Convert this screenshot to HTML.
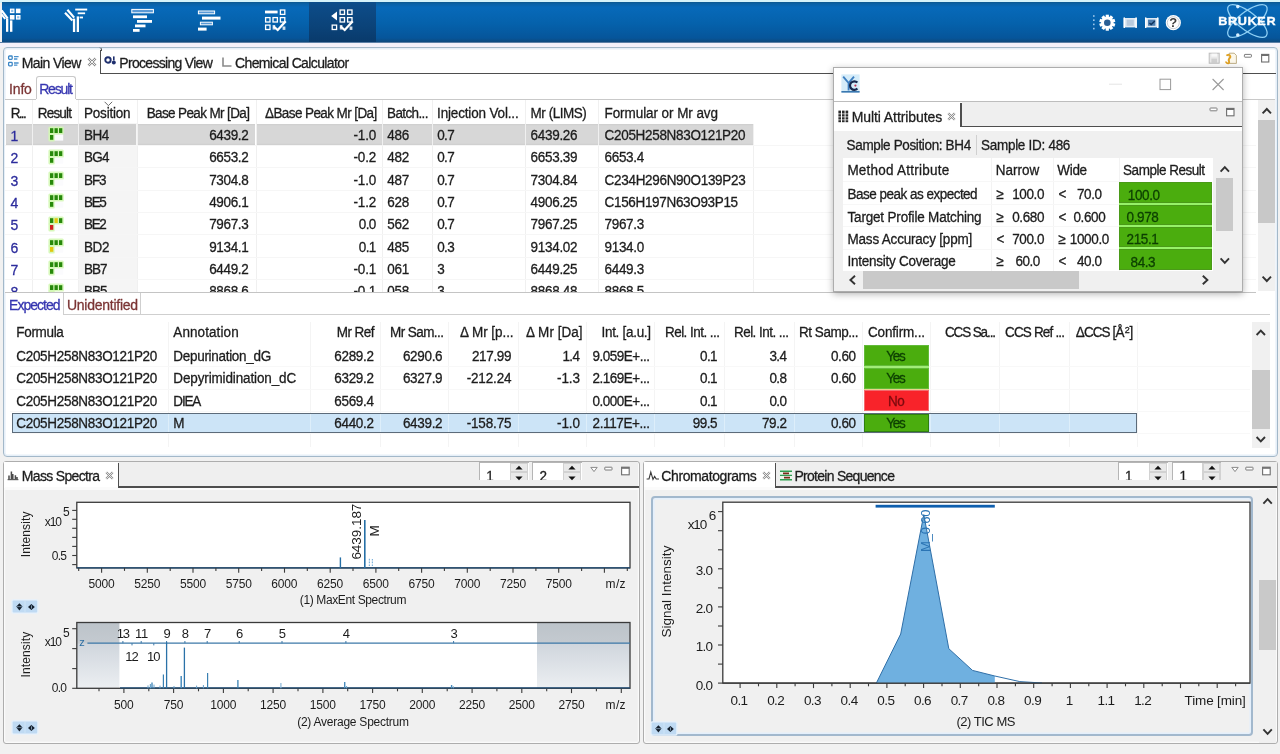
<!DOCTYPE html>
<html><head><meta charset="utf-8"><title>UI</title>
<style>
html,body{margin:0;padding:0;}
body{width:1280px;height:754px;overflow:hidden;position:relative;background:#f1f1f1;font-family:"Liberation Sans",sans-serif;}
.t{position:absolute;white-space:nowrap;font-family:"Liberation Sans",sans-serif;transform:scaleY(1.07);transform-origin:50% 52%;}
.r{position:absolute;}
.a{position:absolute;overflow:visible;}
svg text{font-family:"Liberation Sans",sans-serif;}
#w{position:absolute;left:-20px;top:-20px;width:1320px;height:794px;filter:blur(0.45px);}
#v{position:absolute;left:20px;top:20px;width:1280px;height:754px;}
.t,svg text{-webkit-text-stroke:0.28px currentColor;}
svg text{stroke-width:0.28px;}
</style></head><body><div id="w"><div class="r" style="left:0;top:0;width:1320px;height:794px;background:#f1f1f1"></div><div id="v">
<div class="r" style="left:0.00px;top:0.00px;width:1280.00px;height:754.00px;background:#f1f1f1;"></div>
<div class="r" style="left:0.00px;top:0.00px;width:1280.00px;height:2.50px;background:#d6f3fa;"></div>
<div class="r" style="left:2.00px;top:1.60px;width:1278.00px;height:40.60px;background:linear-gradient(#0d5890 0%,#0a62a8 5%,#0769b9 14%,#0561ab 55%,#06559a 90%,#0d4a7e 100%);"></div>
<div class="r" style="left:309.00px;top:2.00px;width:67.00px;height:40.00px;background:linear-gradient(#0d4d8a 0%,#0b4379 60%,#093a6b 100%);"></div>
<div class="r" style="left:0.00px;top:42.00px;width:1280.00px;height:1.20px;background:#5b7fa6;"></div>
<div class="r" style="left:0.00px;top:43.00px;width:1280.00px;height:4.00px;background:#f3f1fa;"></div>
<svg class="a" style="left:0;top:0" width="1280" height="44" viewBox="0 0 1280 44"><g fill="#ffffff"><rect x="6" y="18.4" width="2.3" height="13.4"/><rect x="10" y="20.4" width="2.4" height="11.4"/><path d="M1.6 10.4 L7.6 18.4" stroke="#ffffff" stroke-width="2.2" fill="none"/><path d="M1.6 14.4 L5.2 19" stroke="#ffffff" stroke-width="2" fill="none"/><rect x="10.5" y="9.2" width="3.4" height="3.4" fill="#8fc0ea" stroke="#ffffff" stroke-width="1.2"/><rect x="15.9" y="8.6" width="4.6" height="4.6"/><rect x="9.9" y="15" width="4.6" height="4.6"/><rect x="16.5" y="15.6" width="3.4" height="3.4" fill="#8fc0ea" stroke="#ffffff" stroke-width="1.2"/></g><g fill="#ffffff"><rect x="72.9" y="18.6" width="2.3" height="13.4"/><rect x="76.7" y="16.4" width="2.3" height="15.6"/><path d="M67.4 9.8 L74.2 17.6" stroke="#ffffff" stroke-width="2.2" fill="none"/><path d="M65 12.8 L72.4 20.6" stroke="#ffffff" stroke-width="2.2" fill="none"/><rect x="75.2" y="8.6" width="12" height="1.9"/><rect x="77.7" y="12.4" width="7.4" height="1.8"/><rect x="79.6" y="16.6" width="3.4" height="1.8"/></g><g fill="#ffffff"><rect x="131.8" y="9.4" width="21.6" height="3.4" fill="#5a9ad6" stroke="#ffffff" stroke-width="1"/><rect x="133" y="15.4" width="14" height="2.8"/><rect x="137" y="20" width="15" height="2.8"/><rect x="135" y="24.5" width="10.5" height="2.8"/><rect x="133" y="29" width="6.6" height="2.8"/></g><g fill="#ffffff"><rect x="198.4" y="11" width="16.2" height="2.8" fill="#5a9ad6" stroke="#ffffff" stroke-width="1"/><rect x="202" y="16.6" width="18.5" height="3"/><rect x="200.4" y="22.2" width="12" height="2.6" fill="#5a9ad6" stroke="#ffffff" stroke-width="1"/><rect x="198" y="27.6" width="8.6" height="3"/></g><g fill="#ffffff"><rect x="265" y="10.6" width="12.6" height="2.8"/><rect x="280.40000000000003" y="10.0" width="4.4" height="4.4" fill="none" stroke="#ffffff" stroke-width="1.3"/><rect x="265.6" y="17.6" width="4.4" height="4.4" fill="none" stroke="#ffffff" stroke-width="1.3"/><rect x="273.0" y="17.6" width="4.4" height="4.4" fill="none" stroke="#ffffff" stroke-width="1.3"/><rect x="280.40000000000003" y="17.6" width="4.4" height="4.4" fill="none" stroke="#ffffff" stroke-width="1.3"/><rect x="265.6" y="25.1" width="4.4" height="4.4" fill="none" stroke="#ffffff" stroke-width="1.3"/><rect x="272.6" y="25" width="2.6" height="4.6" opacity=".8"/><rect x="282.6" y="26.5" width="2.8" height="3.4" opacity=".8"/><path d="M274.2 25.6 L277.6 28.6 L284.8 20.4 L286.6 22 L277.8 31.4 L272.8 27.2Z"/></g><g fill="#ffffff"><path d="M331.2 16 L337 11.6 L337 20.4Z"/><rect x="340.1" y="10.0" width="4.4" height="4.4" fill="none" stroke="#ffffff" stroke-width="1.3"/><rect x="347.6" y="10.0" width="4.4" height="4.4" fill="none" stroke="#ffffff" stroke-width="1.3"/><rect x="340.1" y="17.6" width="4.4" height="4.4" fill="none" stroke="#ffffff" stroke-width="1.3"/><rect x="347.6" y="17.6" width="4.4" height="4.4" fill="none" stroke="#ffffff" stroke-width="1.3"/><rect x="332.20000000000005" y="25.1" width="4.4" height="4.4" fill="none" stroke="#ffffff" stroke-width="1.3"/><rect x="339.8" y="25" width="2.6" height="4.6" opacity=".8"/><rect x="349.6" y="26.5" width="2.8" height="3.4" opacity=".8"/><path d="M341.2 25.6 L344.6 28.6 L351.8 20.4 L353.6 22 L344.8 31.4 L339.8 27.2Z"/></g><g fill="#9cc6ea"><rect x="1093" y="15.2" width="1.6" height="1.6"/><rect x="1093" y="19.4" width="1.6" height="1.6"/><rect x="1093" y="23.6" width="1.6" height="1.6"/><rect x="1093" y="27.8" width="1.6" height="1.6"/></g><g transform="translate(1107.3 22.7)" fill="#ffffff"><rect x="-1.6" y="-8" width="3.2" height="4" transform="rotate(0)"/><rect x="-1.6" y="-8" width="3.2" height="4" transform="rotate(36)"/><rect x="-1.6" y="-8" width="3.2" height="4" transform="rotate(72)"/><rect x="-1.6" y="-8" width="3.2" height="4" transform="rotate(108)"/><rect x="-1.6" y="-8" width="3.2" height="4" transform="rotate(144)"/><rect x="-1.6" y="-8" width="3.2" height="4" transform="rotate(180)"/><rect x="-1.6" y="-8" width="3.2" height="4" transform="rotate(216)"/><rect x="-1.6" y="-8" width="3.2" height="4" transform="rotate(252)"/><rect x="-1.6" y="-8" width="3.2" height="4" transform="rotate(288)"/><rect x="-1.6" y="-8" width="3.2" height="4" transform="rotate(324)"/><circle r="6.2"/><circle r="3.3" fill="#2a5f95"/></g><g><rect x="1123.6" y="18" width="13.2" height="9.4" fill="#dfe9f3"/><rect x="1126.6" y="19.6" width="7.2" height="6.2" fill="#b8cadd"/><rect x="1123.6" y="17.4" width="1.4" height="10.6" fill="#ffffff"/><rect x="1135.4" y="17.4" width="1.4" height="10.6" fill="#ffffff"/></g><g><rect x="1145" y="18" width="13.4" height="9.4" fill="#dfe9f3"/><rect x="1148" y="19.6" width="7.4" height="6.2" fill="#4f7fb0"/><path d="M1149.4 23 l1.8 1.6 l3.6 -3.6" stroke="#10355e" stroke-width="1.4" fill="none"/><rect x="1145" y="17.4" width="1.4" height="10.6" fill="#ffffff"/><rect x="1157" y="17.4" width="1.4" height="10.6" fill="#ffffff"/></g><g><circle cx="1173.3" cy="22.7" r="7.6" fill="#ffffff"/><circle cx="1173.3" cy="22.7" r="6" fill="none" stroke="#c8cdd3" stroke-width="1"/><text x="1173.3" y="27.4" font-size="13" font-weight="bold" text-anchor="middle" fill="#3c3c3c">?</text></g><g fill="none" stroke="#8fd0f5" stroke-width="1.3"><ellipse cx="1247.4" cy="21" rx="24" ry="9" transform="rotate(38 1247.4 21)"/><ellipse cx="1247.4" cy="21" rx="24" ry="9" transform="rotate(-38 1247.4 21)"/></g><circle cx="1237.8" cy="6.6" r="1.8" fill="#d8f0ff"/><circle cx="1237.8" cy="35" r="1.8" fill="#d8f0ff"/><text transform="translate(1218.2 24.7) scale(1.268 1)" font-size="10" font-weight="bold" letter-spacing="0.5" fill="#ffffff" stroke="#ffffff" stroke-width="0.5">BRUKER</text></svg>
<div class="r" style="left:3.20px;top:47.20px;width:1274.60px;height:409.60px;background:#ffffff;border:1.4px solid #a3b8c9;border-radius:4px;box-sizing:border-box;box-shadow:inset 0 0 0 1.6px #e6eff8;"></div>
<div class="r" style="left:100.50px;top:72.60px;width:1175.90px;height:1.40px;background:#4e4e4e;"></div>
<div class="r" style="left:100.00px;top:50.00px;width:1.40px;height:23.80px;background:#4e4e4e;"></div>
<div class="r" style="left:98.60px;top:47.40px;width:3.00px;height:3.40px;background:transparent;border-top:1.3px solid #8fa2b3;border-right:1.4px solid #4e4e4e;border-top-right-radius:3px;box-sizing:border-box;"></div>
<svg class="a" style="left:7px;top:54px" width="14" height="14" viewBox="0 0 14 14"><g fill="none" stroke="#3b86c6" stroke-width="1.3"><rect x="1.6" y="2" width="3.6" height="3.4" rx=".8"/><rect x="1.6" y="8.4" width="3.6" height="3.4" rx=".8"/></g><g stroke="#4a90cc" stroke-width="1.3"><path d="M7 2.6h4.6M7 5h3.4M7 9h4.6M7 11.2h3.4"/></g></svg>
<span class="t" style="left:21.80px;top:53.60px;font-size:14px;line-height:18px;color:#1c1c1c;letter-spacing:-0.602px;">Main View</span>
<svg class="a" style="left:87px;top:57px" width="10" height="10" viewBox="0 0 10 10"><path d="M1.4 1.4 L8.6 8.6 M8.6 1.4 L1.4 8.6" stroke="#8a8a8a" stroke-width="2.4"/><path d="M1.4 1.4 L8.6 8.6 M8.6 1.4 L1.4 8.6" stroke="#ffffff" stroke-width="0.9"/></svg>
<svg class="a" style="left:104px;top:55px" width="13" height="12" viewBox="0 0 13 12"><circle cx="4" cy="5" r="2.7" fill="none" stroke="#1e2f6e" stroke-width="1.9"/><circle cx="9.8" cy="7.6" r="2" fill="#1e2f6e"/><rect x="9" y="1.4" width="1.6" height="4" fill="#1e2f6e"/></svg>
<span class="t" style="left:119.30px;top:53.60px;font-size:14px;line-height:18px;color:#1c1c1c;letter-spacing:-0.694px;">Processing View</span>
<svg class="a" style="left:221px;top:56px" width="12" height="12" viewBox="0 0 12 12"><path d="M2 1.5V10H10.5" fill="none" stroke="#8a8a8a" stroke-width="1.6"/></svg>
<span class="t" style="left:235.00px;top:53.60px;font-size:14px;line-height:18px;color:#1c1c1c;letter-spacing:-0.623px;">Chemical Calculator</span>
<svg class="a" style="left:1206px;top:50px" width="68" height="16" viewBox="1206 50 68 16"><rect x="1209.2" y="53.2" width="10" height="10" fill="#e9e9e9" stroke="#bdbdbd" stroke-width="1"/><rect x="1211.4" y="58.6" width="5.6" height="4.4" fill="#cfcfcf"/><rect x="1211.4" y="53.6" width="5.6" height="3" fill="#f8f8f8"/><path d="M1229.2 53.2h5l2.2 2.2v8h-7.2z" fill="#fbf7ea" stroke="#b9a77a" stroke-width=".9"/><path d="M1226.4 55.6c1.6-1.4 3.6-.8 4 .8c.4 1.8-1.6 2-1.8 3.4c-.2 1.4 1.4 2 .2 3.2c-1.2 1-3-.2-2.6-1.6" fill="none" stroke="#e0a020" stroke-width="1.8"/><rect x="1244.4" y="54.4" width="7" height="2.8" rx=".6" fill="#fff" stroke="#7c7c7c" stroke-width="1"/><rect x="1261.6" y="54.4" width="7.2" height="7.6" fill="#fff" stroke="#6e6e6e" stroke-width="1.1"/><rect x="1261.6" y="54.4" width="7.2" height="1.6" fill="#6e6e6e"/></svg>
<div class="r" style="left:5.00px;top:98.60px;width:30.80px;height:1.20px;background:#c9c9c9;"></div>
<div class="r" style="left:75.60px;top:98.60px;width:1199.80px;height:1.20px;background:#c9c9c9;"></div>
<div class="r" style="left:35.60px;top:76.40px;width:40.60px;height:23.00px;background:#ffffff;border:1.2px solid #c9c9c9;border-bottom:none;border-radius:3px 3px 0 0;box-sizing:border-box;"></div>
<span class="t" style="left:9.10px;top:80.40px;font-size:14px;line-height:18px;color:#7b3434;letter-spacing:-0.181px;">Info</span>
<span class="t" style="left:39.20px;top:80.40px;font-size:14px;line-height:18px;color:#3535b0;letter-spacing:-1.174px;">Result</span>
<div class="r" style="left:5px;top:100px;width:1251px;height:191.8px;overflow:hidden;background:#fff">
<div class="r" style="left:74.30px;top:23.00px;width:57.40px;height:170.00px;background:#f5f5f5;"></div>
<div class="r" style="left:1.00px;top:23.70px;width:26.20px;height:21.30px;background:#d7d7d7;box-shadow:inset 0 1.2px 0 #d0d0d0,inset 0 -1.2px 0 #d0d0d0;"></div>
<div class="r" style="left:28.40px;top:23.70px;width:44.80px;height:21.30px;background:#d7d7d7;box-shadow:inset 0 1.2px 0 #d0d0d0,inset 0 -1.2px 0 #d0d0d0;"></div>
<div class="r" style="left:74.40px;top:23.70px;width:57.00px;height:21.30px;background:#cfcfcf;box-shadow:inset 0 1.2px 0 #d0d0d0,inset 0 -1.2px 0 #d0d0d0;"></div>
<div class="r" style="left:132.80px;top:23.70px;width:117.60px;height:21.30px;background:#d7d7d7;box-shadow:inset 0 1.2px 0 #d0d0d0,inset 0 -1.2px 0 #d0d0d0;"></div>
<div class="r" style="left:251.80px;top:23.70px;width:125.00px;height:21.30px;background:#d7d7d7;box-shadow:inset 0 1.2px 0 #d0d0d0,inset 0 -1.2px 0 #d0d0d0;"></div>
<div class="r" style="left:378.20px;top:23.70px;width:48.80px;height:21.30px;background:#d7d7d7;box-shadow:inset 0 1.2px 0 #d0d0d0,inset 0 -1.2px 0 #d0d0d0;"></div>
<div class="r" style="left:428.40px;top:23.70px;width:91.40px;height:21.30px;background:#d7d7d7;box-shadow:inset 0 1.2px 0 #d0d0d0,inset 0 -1.2px 0 #d0d0d0;"></div>
<div class="r" style="left:521.20px;top:23.70px;width:71.80px;height:21.30px;background:#d7d7d7;box-shadow:inset 0 1.2px 0 #d0d0d0,inset 0 -1.2px 0 #d0d0d0;"></div>
<div class="r" style="left:594.40px;top:23.70px;width:153.60px;height:21.30px;background:#d7d7d7;box-shadow:inset 0 1.2px 0 #d0d0d0,inset 0 -1.2px 0 #d0d0d0;"></div>
<div class="r" style="left:27.20px;top:0.00px;width:1.00px;height:192.00px;background:#f0f0f0;"></div>
<div class="r" style="left:73.30px;top:0.00px;width:1.00px;height:192.00px;background:#f0f0f0;"></div>
<div class="r" style="left:131.50px;top:0.00px;width:1.00px;height:192.00px;background:#f0f0f0;"></div>
<div class="r" style="left:250.50px;top:0.00px;width:1.00px;height:192.00px;background:#f0f0f0;"></div>
<div class="r" style="left:376.90px;top:0.00px;width:1.00px;height:192.00px;background:#f0f0f0;"></div>
<div class="r" style="left:427.20px;top:0.00px;width:1.00px;height:192.00px;background:#f0f0f0;"></div>
<div class="r" style="left:520.00px;top:0.00px;width:1.00px;height:192.00px;background:#f0f0f0;"></div>
<div class="r" style="left:593.20px;top:0.00px;width:1.00px;height:192.00px;background:#f0f0f0;"></div>
<div class="r" style="left:747.50px;top:0.00px;width:1.00px;height:192.00px;background:#f0f0f0;"></div>
<div class="r" style="left:0.00px;top:45.05px;width:1251.00px;height:1.00px;background:#f6f6f6;"></div>
<div class="r" style="left:0.00px;top:67.40px;width:1251.00px;height:1.00px;background:#f6f6f6;"></div>
<div class="r" style="left:0.00px;top:89.75px;width:1251.00px;height:1.00px;background:#f6f6f6;"></div>
<div class="r" style="left:0.00px;top:112.10px;width:1251.00px;height:1.00px;background:#f6f6f6;"></div>
<div class="r" style="left:0.00px;top:134.45px;width:1251.00px;height:1.00px;background:#f6f6f6;"></div>
<div class="r" style="left:0.00px;top:156.80px;width:1251.00px;height:1.00px;background:#f6f6f6;"></div>
<div class="r" style="left:0.00px;top:179.15px;width:1251.00px;height:1.00px;background:#f6f6f6;"></div>
<div class="r" style="left:0.00px;top:201.50px;width:1251.00px;height:1.00px;background:#f6f6f6;"></div>
<div class="r" style="left:748.00px;top:0.00px;width:503.00px;height:24.00px;background:#ffffff;"></div>
<span class="t" style="left:5.70px;top:4.50px;font-size:13.5px;line-height:18px;color:#1c1c1c;letter-spacing:-1.667px;">R...</span>
<span class="t" style="left:32.80px;top:4.50px;font-size:13.5px;line-height:18px;color:#1c1c1c;letter-spacing:-0.816px;">Result</span>
<span class="t" style="left:79.00px;top:4.50px;font-size:13.5px;line-height:18px;color:#1c1c1c;letter-spacing:-0.207px;">Position</span>
<span class="t" style="left:141.70px;top:4.50px;font-size:13.5px;line-height:18px;color:#1c1c1c;letter-spacing:-0.627px;">Base Peak Mr [Da]</span>
<span class="t" style="left:260.00px;top:4.50px;font-size:13.5px;line-height:18px;color:#1c1c1c;letter-spacing:-0.591px;">ΔBase Peak Mr [Da]</span>
<span class="t" style="left:382.10px;top:4.50px;font-size:13.5px;line-height:18px;color:#1c1c1c;letter-spacing:-0.626px;">Batch...</span>
<span class="t" style="left:432.10px;top:4.50px;font-size:13.5px;line-height:18px;color:#1c1c1c;letter-spacing:-0.165px;">Injection Vol...</span>
<span class="t" style="left:525.60px;top:4.50px;font-size:13.5px;line-height:18px;color:#1c1c1c;letter-spacing:-0.477px;">Mr (LIMS)</span>
<span class="t" style="left:599.50px;top:4.50px;font-size:13.5px;line-height:18px;color:#1c1c1c;letter-spacing:-0.073px;">Formular or Mr avg</span>
<svg class="a" style="left:99px;top:1px" width="9" height="6" viewBox="0 0 9 6"><path d="M0.6 0.8 L4.4 4.6 L8.2 0.8" fill="none" stroke="#6a6a6a" stroke-width="1"/></svg>
<span class="t" style="left:5.60px;top:26.90px;font-size:14px;line-height:18px;color:#2c2c9c;letter-spacing:0.000px;">1</span>
<svg class="a" style="left:43.0px;top:26.3px" width="17" height="16" viewBox="-2 -2 17 16"><rect x="-1.6" y="-1.6" width="15.4" height="8.4" rx="1.5" fill="#d3f7b4" opacity=".9"/><rect x="-1.6" y="5" width="6.6" height="8.4" rx="1.5" fill="#d3f7b4" opacity=".9"/><rect x="4.6" y="6.6" width="8.6" height="6" fill="#fbfbfd"/><rect x="0.0" y="0.2" width="3.3" height="4.8" fill="#27890a"/><rect x="4.5" y="0.2" width="3.3" height="4.8" fill="#27890a"/><rect x="9.0" y="0.2" width="3.3" height="4.8" fill="#27890a"/><rect x="0" y="7" width="3.3" height="4.8" fill="#27890a"/></svg>
<span class="t" style="left:79.00px;top:26.90px;font-size:13.5px;line-height:18px;color:#1c1c1c;letter-spacing:-0.533px;">BH4</span>
<span class="t" style="left:204.15px;top:26.90px;font-size:13.5px;line-height:18px;color:#1c1c1c;letter-spacing:-0.336px;">6439.2</span>
<span class="t" style="left:348.50px;top:26.90px;font-size:13.5px;line-height:18px;color:#1c1c1c;letter-spacing:-0.127px;">-1.0</span>
<span class="t" style="left:382.20px;top:26.90px;font-size:13.5px;line-height:18px;color:#1c1c1c;letter-spacing:-0.248px;">486</span>
<span class="t" style="left:432.20px;top:26.90px;font-size:13.5px;line-height:18px;color:#1c1c1c;letter-spacing:-0.591px;">0.7</span>
<span class="t" style="left:525.60px;top:26.90px;font-size:13.5px;line-height:18px;color:#1c1c1c;letter-spacing:-0.307px;">6439.26</span>
<span class="t" style="left:599.60px;top:26.90px;font-size:13.5px;line-height:18px;color:#1c1c1c;letter-spacing:-0.321px;">C205H258N83O121P20</span>
<span class="t" style="left:5.60px;top:49.25px;font-size:14px;line-height:18px;color:#2c2c9c;letter-spacing:0.000px;">2</span>
<svg class="a" style="left:43.0px;top:48.7px" width="17" height="16" viewBox="-2 -2 17 16"><rect x="-1.6" y="-1.6" width="15.4" height="8.4" rx="1.5" fill="#d3f7b4" opacity=".9"/><rect x="-1.6" y="5" width="6.6" height="8.4" rx="1.5" fill="#d3f7b4" opacity=".9"/><rect x="4.6" y="6.6" width="8.6" height="6" fill="#fbfbfd"/><rect x="0.0" y="0.2" width="3.3" height="4.8" fill="#27890a"/><rect x="4.5" y="0.2" width="3.3" height="4.8" fill="#27890a"/><rect x="9.0" y="0.2" width="3.3" height="4.8" fill="#27890a"/><rect x="0" y="7" width="3.3" height="4.8" fill="#27890a"/></svg>
<span class="t" style="left:79.00px;top:49.25px;font-size:13.5px;line-height:18px;color:#1c1c1c;letter-spacing:-0.808px;">BG4</span>
<span class="t" style="left:204.15px;top:49.25px;font-size:13.5px;line-height:18px;color:#1c1c1c;letter-spacing:-0.336px;">6653.2</span>
<span class="t" style="left:348.50px;top:49.25px;font-size:13.5px;line-height:18px;color:#1c1c1c;letter-spacing:-0.127px;">-0.2</span>
<span class="t" style="left:382.20px;top:49.25px;font-size:13.5px;line-height:18px;color:#1c1c1c;letter-spacing:-0.248px;">482</span>
<span class="t" style="left:432.20px;top:49.25px;font-size:13.5px;line-height:18px;color:#1c1c1c;letter-spacing:-0.591px;">0.7</span>
<span class="t" style="left:525.60px;top:49.25px;font-size:13.5px;line-height:18px;color:#1c1c1c;letter-spacing:-0.307px;">6653.39</span>
<span class="t" style="left:599.60px;top:49.25px;font-size:13.5px;line-height:18px;color:#1c1c1c;letter-spacing:-0.336px;">6653.4</span>
<span class="t" style="left:5.60px;top:71.60px;font-size:14px;line-height:18px;color:#2c2c9c;letter-spacing:0.000px;">3</span>
<svg class="a" style="left:43.0px;top:71.0px" width="17" height="16" viewBox="-2 -2 17 16"><rect x="-1.6" y="-1.6" width="15.4" height="8.4" rx="1.5" fill="#d3f7b4" opacity=".9"/><rect x="-1.6" y="5" width="6.6" height="8.4" rx="1.5" fill="#d3f7b4" opacity=".9"/><rect x="4.6" y="6.6" width="8.6" height="6" fill="#fbfbfd"/><rect x="0.0" y="0.2" width="3.3" height="4.8" fill="#27890a"/><rect x="4.5" y="0.2" width="3.3" height="4.8" fill="#27890a"/><rect x="9.0" y="0.2" width="3.3" height="4.8" fill="#27890a"/><rect x="0" y="7" width="3.3" height="4.8" fill="#27890a"/></svg>
<span class="t" style="left:79.00px;top:71.60px;font-size:13.5px;line-height:18px;color:#1c1c1c;letter-spacing:-1.083px;">BF3</span>
<span class="t" style="left:204.15px;top:71.60px;font-size:13.5px;line-height:18px;color:#1c1c1c;letter-spacing:-0.336px;">7304.8</span>
<span class="t" style="left:348.50px;top:71.60px;font-size:13.5px;line-height:18px;color:#1c1c1c;letter-spacing:-0.127px;">-1.0</span>
<span class="t" style="left:382.20px;top:71.60px;font-size:13.5px;line-height:18px;color:#1c1c1c;letter-spacing:-0.248px;">487</span>
<span class="t" style="left:432.20px;top:71.60px;font-size:13.5px;line-height:18px;color:#1c1c1c;letter-spacing:-0.591px;">0.7</span>
<span class="t" style="left:525.60px;top:71.60px;font-size:13.5px;line-height:18px;color:#1c1c1c;letter-spacing:-0.307px;">7304.84</span>
<span class="t" style="left:599.60px;top:71.60px;font-size:13.5px;line-height:18px;color:#1c1c1c;letter-spacing:-0.309px;">C234H296N90O139P23</span>
<span class="t" style="left:5.60px;top:93.95px;font-size:14px;line-height:18px;color:#2c2c9c;letter-spacing:0.000px;">4</span>
<svg class="a" style="left:43.0px;top:93.4px" width="17" height="16" viewBox="-2 -2 17 16"><rect x="-1.6" y="-1.6" width="15.4" height="8.4" rx="1.5" fill="#d3f7b4" opacity=".9"/><rect x="-1.6" y="5" width="6.6" height="8.4" rx="1.5" fill="#d3f7b4" opacity=".9"/><rect x="4.6" y="6.6" width="8.6" height="6" fill="#fbfbfd"/><rect x="0.0" y="0.2" width="3.3" height="4.8" fill="#27890a"/><rect x="4.5" y="0.2" width="3.3" height="4.8" fill="#27890a"/><rect x="9.0" y="0.2" width="3.3" height="4.8" fill="#27890a"/><rect x="0" y="7" width="3.3" height="4.8" fill="#27890a"/></svg>
<span class="t" style="left:79.00px;top:93.95px;font-size:13.5px;line-height:18px;color:#1c1c1c;letter-spacing:-1.358px;">BE5</span>
<span class="t" style="left:204.15px;top:93.95px;font-size:13.5px;line-height:18px;color:#1c1c1c;letter-spacing:-0.336px;">4906.1</span>
<span class="t" style="left:348.50px;top:93.95px;font-size:13.5px;line-height:18px;color:#1c1c1c;letter-spacing:-0.127px;">-1.2</span>
<span class="t" style="left:382.20px;top:93.95px;font-size:13.5px;line-height:18px;color:#1c1c1c;letter-spacing:-0.248px;">628</span>
<span class="t" style="left:432.20px;top:93.95px;font-size:13.5px;line-height:18px;color:#1c1c1c;letter-spacing:-0.591px;">0.7</span>
<span class="t" style="left:525.60px;top:93.95px;font-size:13.5px;line-height:18px;color:#1c1c1c;letter-spacing:-0.307px;">4906.25</span>
<span class="t" style="left:599.60px;top:93.95px;font-size:13.5px;line-height:18px;color:#1c1c1c;letter-spacing:-0.334px;">C156H197N63O93P15</span>
<span class="t" style="left:5.60px;top:116.30px;font-size:14px;line-height:18px;color:#2c2c9c;letter-spacing:0.000px;">5</span>
<svg class="a" style="left:43.0px;top:115.7px" width="17" height="16" viewBox="-2 -2 17 16"><rect x="-1.6" y="-1.6" width="15.4" height="8.4" rx="1.5" fill="#d3f7b4" opacity=".9"/><rect x="-1.6" y="5" width="6.6" height="8.4" rx="1.5" fill="#d3f7b4" opacity=".9"/><rect x="4.6" y="6.6" width="8.6" height="6" fill="#fbfbfd"/><rect x="0.0" y="0.2" width="3.3" height="4.8" fill="#27890a"/><rect x="4.5" y="0.2" width="3.3" height="4.8" fill="#e2c710"/><rect x="9.0" y="0.2" width="3.3" height="4.8" fill="#27890a"/><rect x="0" y="7" width="3.3" height="4.8" fill="#d02020"/></svg>
<span class="t" style="left:79.00px;top:116.30px;font-size:13.5px;line-height:18px;color:#1c1c1c;letter-spacing:-1.358px;">BE2</span>
<span class="t" style="left:204.15px;top:116.30px;font-size:13.5px;line-height:18px;color:#1c1c1c;letter-spacing:-0.336px;">7967.3</span>
<span class="t" style="left:353.80px;top:116.30px;font-size:13.5px;line-height:18px;color:#1c1c1c;letter-spacing:-0.591px;">0.0</span>
<span class="t" style="left:382.20px;top:116.30px;font-size:13.5px;line-height:18px;color:#1c1c1c;letter-spacing:-0.248px;">562</span>
<span class="t" style="left:432.20px;top:116.30px;font-size:13.5px;line-height:18px;color:#1c1c1c;letter-spacing:-0.591px;">0.7</span>
<span class="t" style="left:525.60px;top:116.30px;font-size:13.5px;line-height:18px;color:#1c1c1c;letter-spacing:-0.307px;">7967.25</span>
<span class="t" style="left:599.60px;top:116.30px;font-size:13.5px;line-height:18px;color:#1c1c1c;letter-spacing:-0.336px;">7967.3</span>
<span class="t" style="left:5.60px;top:138.65px;font-size:14px;line-height:18px;color:#2c2c9c;letter-spacing:0.000px;">6</span>
<svg class="a" style="left:43.0px;top:138.1px" width="17" height="16" viewBox="-2 -2 17 16"><rect x="-1.6" y="-1.6" width="15.4" height="8.4" rx="1.5" fill="#d3f7b4" opacity=".9"/><rect x="-1.6" y="5" width="6.6" height="8.4" rx="1.5" fill="#d3f7b4" opacity=".9"/><rect x="4.6" y="6.6" width="8.6" height="6" fill="#fbfbfd"/><rect x="0.0" y="0.2" width="3.3" height="4.8" fill="#27890a"/><rect x="4.5" y="0.2" width="3.3" height="4.8" fill="#27890a"/><rect x="9.0" y="0.2" width="3.3" height="4.8" fill="#27890a"/><rect x="0" y="7" width="3.3" height="4.8" fill="#e2c710"/></svg>
<span class="t" style="left:79.00px;top:138.65px;font-size:13.5px;line-height:18px;color:#1c1c1c;letter-spacing:-0.433px;">BD2</span>
<span class="t" style="left:204.15px;top:138.65px;font-size:13.5px;line-height:18px;color:#1c1c1c;letter-spacing:-0.336px;">9134.1</span>
<span class="t" style="left:353.80px;top:138.65px;font-size:13.5px;line-height:18px;color:#1c1c1c;letter-spacing:-0.591px;">0.1</span>
<span class="t" style="left:382.20px;top:138.65px;font-size:13.5px;line-height:18px;color:#1c1c1c;letter-spacing:-0.248px;">485</span>
<span class="t" style="left:432.20px;top:138.65px;font-size:13.5px;line-height:18px;color:#1c1c1c;letter-spacing:-0.591px;">0.3</span>
<span class="t" style="left:525.60px;top:138.65px;font-size:13.5px;line-height:18px;color:#1c1c1c;letter-spacing:-0.307px;">9134.02</span>
<span class="t" style="left:599.60px;top:138.65px;font-size:13.5px;line-height:18px;color:#1c1c1c;letter-spacing:-0.336px;">9134.0</span>
<span class="t" style="left:5.60px;top:161.00px;font-size:14px;line-height:18px;color:#2c2c9c;letter-spacing:0.000px;">7</span>
<svg class="a" style="left:43.0px;top:160.4px" width="17" height="16" viewBox="-2 -2 17 16"><rect x="-1.6" y="-1.6" width="15.4" height="8.4" rx="1.5" fill="#d3f7b4" opacity=".9"/><rect x="-1.6" y="5" width="6.6" height="8.4" rx="1.5" fill="#d3f7b4" opacity=".9"/><rect x="4.6" y="6.6" width="8.6" height="6" fill="#fbfbfd"/><rect x="0.0" y="0.2" width="3.3" height="4.8" fill="#27890a"/><rect x="4.5" y="0.2" width="3.3" height="4.8" fill="#27890a"/><rect x="9.0" y="0.2" width="3.3" height="4.8" fill="#27890a"/><rect x="0" y="7" width="3.3" height="4.8" fill="#27890a"/></svg>
<span class="t" style="left:79.00px;top:161.00px;font-size:13.5px;line-height:18px;color:#1c1c1c;letter-spacing:-0.958px;">BB7</span>
<span class="t" style="left:204.15px;top:161.00px;font-size:13.5px;line-height:18px;color:#1c1c1c;letter-spacing:-0.336px;">6449.2</span>
<span class="t" style="left:348.50px;top:161.00px;font-size:13.5px;line-height:18px;color:#1c1c1c;letter-spacing:-0.127px;">-0.1</span>
<span class="t" style="left:382.20px;top:161.00px;font-size:13.5px;line-height:18px;color:#1c1c1c;letter-spacing:-0.248px;">061</span>
<span class="t" style="left:432.20px;top:161.00px;font-size:13.5px;line-height:18px;color:#1c1c1c;letter-spacing:0.000px;">3</span>
<span class="t" style="left:525.60px;top:161.00px;font-size:13.5px;line-height:18px;color:#1c1c1c;letter-spacing:-0.307px;">6449.25</span>
<span class="t" style="left:599.60px;top:161.00px;font-size:13.5px;line-height:18px;color:#1c1c1c;letter-spacing:-0.336px;">6449.3</span>
<span class="t" style="left:5.60px;top:183.35px;font-size:14px;line-height:18px;color:#2c2c9c;letter-spacing:0.000px;">8</span>
<svg class="a" style="left:43.0px;top:182.8px" width="17" height="16" viewBox="-2 -2 17 16"><rect x="-1.6" y="-1.6" width="15.4" height="8.4" rx="1.5" fill="#d3f7b4" opacity=".9"/><rect x="-1.6" y="5" width="6.6" height="8.4" rx="1.5" fill="#d3f7b4" opacity=".9"/><rect x="4.6" y="6.6" width="8.6" height="6" fill="#fbfbfd"/><rect x="0.0" y="0.2" width="3.3" height="4.8" fill="#27890a"/><rect x="4.5" y="0.2" width="3.3" height="4.8" fill="#27890a"/><rect x="9.0" y="0.2" width="3.3" height="4.8" fill="#27890a"/><rect x="0" y="7" width="3.3" height="4.8" fill="#27890a"/></svg>
<span class="t" style="left:79.00px;top:183.35px;font-size:13.5px;line-height:18px;color:#1c1c1c;letter-spacing:-0.958px;">BB5</span>
<span class="t" style="left:204.15px;top:183.35px;font-size:13.5px;line-height:18px;color:#1c1c1c;letter-spacing:-0.336px;">8868.6</span>
<span class="t" style="left:348.50px;top:183.35px;font-size:13.5px;line-height:18px;color:#1c1c1c;letter-spacing:-0.127px;">-0.1</span>
<span class="t" style="left:382.20px;top:183.35px;font-size:13.5px;line-height:18px;color:#1c1c1c;letter-spacing:-0.248px;">058</span>
<span class="t" style="left:432.20px;top:183.35px;font-size:13.5px;line-height:18px;color:#1c1c1c;letter-spacing:0.000px;">3</span>
<span class="t" style="left:525.60px;top:183.35px;font-size:13.5px;line-height:18px;color:#1c1c1c;letter-spacing:-0.307px;">8868.48</span>
<span class="t" style="left:599.60px;top:183.35px;font-size:13.5px;line-height:18px;color:#1c1c1c;letter-spacing:-0.336px;">8868.5</span>
</div>
<div class="r" style="left:5.00px;top:291.60px;width:1251.00px;height:1.20px;background:#c4c4c4;"></div>
<div class="r" style="left:1257.60px;top:100.00px;width:17.60px;height:191.00px;background:#f0f0f0;"></div>
<div class="r" style="left:1257.60px;top:120.00px;width:17.60px;height:103.40px;background:#c8c8c8;"></div>
<svg class="a" style="left:1257.6px;top:100px" width="18" height="191" viewBox="0 0 18 191"><path d="M4.6 13.4 L8.8 9 L13 13.4" fill="none" stroke="#333" stroke-width="1.9"/><path d="M4.6 176.6 L8.8 181 L13 176.6" fill="none" stroke="#333" stroke-width="1.9"/></svg>
<span class="t" style="left:9.10px;top:295.80px;font-size:14px;line-height:18px;color:#3535b0;letter-spacing:-0.994px;">Expected</span>
<span class="t" style="left:67.00px;top:295.80px;font-size:14px;line-height:18px;color:#7b3434;letter-spacing:-0.264px;">Unidentified</span>
<div class="r" style="left:63.00px;top:293.40px;width:1.20px;height:21.40px;background:#cfcfcf;"></div>
<div class="r" style="left:139.80px;top:293.40px;width:1.20px;height:21.40px;background:#cfcfcf;"></div>
<div class="r" style="left:63.00px;top:314.20px;width:1207.00px;height:1.20px;background:#cfcfcf;"></div>
<div class="r" style="left:167.80px;top:322.00px;width:1.00px;height:125.00px;background:#f4f4f4;"></div>
<div class="r" style="left:309.50px;top:322.00px;width:1.00px;height:125.00px;background:#f4f4f4;"></div>
<div class="r" style="left:379.50px;top:322.00px;width:1.00px;height:125.00px;background:#f4f4f4;"></div>
<div class="r" style="left:448.00px;top:322.00px;width:1.00px;height:125.00px;background:#f4f4f4;"></div>
<div class="r" style="left:518.00px;top:322.00px;width:1.00px;height:125.00px;background:#f4f4f4;"></div>
<div class="r" style="left:585.50px;top:322.00px;width:1.00px;height:125.00px;background:#f4f4f4;"></div>
<div class="r" style="left:653.50px;top:322.00px;width:1.00px;height:125.00px;background:#f4f4f4;"></div>
<div class="r" style="left:723.50px;top:322.00px;width:1.00px;height:125.00px;background:#f4f4f4;"></div>
<div class="r" style="left:793.50px;top:322.00px;width:1.00px;height:125.00px;background:#f4f4f4;"></div>
<div class="r" style="left:862.00px;top:322.00px;width:1.00px;height:125.00px;background:#f4f4f4;"></div>
<div class="r" style="left:929.50px;top:322.00px;width:1.00px;height:125.00px;background:#f4f4f4;"></div>
<div class="r" style="left:998.50px;top:322.00px;width:1.00px;height:125.00px;background:#f4f4f4;"></div>
<div class="r" style="left:1068.50px;top:322.00px;width:1.00px;height:125.00px;background:#f4f4f4;"></div>
<div class="r" style="left:1137.00px;top:322.00px;width:1.00px;height:125.00px;background:#f4f4f4;"></div>
<div class="r" style="left:10.00px;top:366.40px;width:1240.00px;height:1.00px;background:#f8f8f8;"></div>
<div class="r" style="left:10.00px;top:388.60px;width:1240.00px;height:1.00px;background:#f8f8f8;"></div>
<div class="r" style="left:10.00px;top:410.70px;width:1240.00px;height:1.00px;background:#f8f8f8;"></div>
<div class="r" style="left:10.00px;top:433.10px;width:1240.00px;height:1.00px;background:#f8f8f8;"></div>
<span class="t" style="left:16.30px;top:324.20px;font-size:13.5px;line-height:18px;color:#1c1c1c;letter-spacing:-0.324px;">Formula</span>
<span class="t" style="left:173.30px;top:324.20px;font-size:13.5px;line-height:18px;color:#1c1c1c;letter-spacing:0.090px;">Annotation</span>
<span class="t" style="left:336.80px;top:324.20px;font-size:13.5px;line-height:18px;color:#1c1c1c;letter-spacing:-0.583px;">Mr Ref</span>
<span class="t" style="left:390.00px;top:324.20px;font-size:13.5px;line-height:18px;color:#1c1c1c;letter-spacing:-0.564px;">Mr Sam...</span>
<span class="t" style="left:460.00px;top:324.20px;font-size:13.5px;line-height:18px;color:#1c1c1c;letter-spacing:-0.048px;">Δ Mr [p...</span>
<span class="t" style="left:526.00px;top:324.20px;font-size:13.5px;line-height:18px;color:#1c1c1c;letter-spacing:0.040px;">Δ Mr [Da]</span>
<span class="t" style="left:601.50px;top:324.20px;font-size:13.5px;line-height:18px;color:#1c1c1c;letter-spacing:-0.295px;">Int. [a.u.]</span>
<span class="t" style="left:665.00px;top:324.20px;font-size:13.5px;line-height:18px;color:#1c1c1c;letter-spacing:-0.544px;">Rel. Int. ...</span>
<span class="t" style="left:734.00px;top:324.20px;font-size:13.5px;line-height:18px;color:#1c1c1c;letter-spacing:-0.544px;">Rel. Int. ...</span>
<span class="t" style="left:799.00px;top:324.20px;font-size:13.5px;line-height:18px;color:#1c1c1c;letter-spacing:-0.465px;">Rt Samp...</span>
<span class="t" style="left:868.00px;top:324.20px;font-size:13.5px;line-height:18px;color:#1c1c1c;letter-spacing:-0.170px;">Confirm...</span>
<span class="t" style="left:945.00px;top:324.20px;font-size:13.5px;line-height:18px;color:#1c1c1c;letter-spacing:-1.127px;">CCS Sa...</span>
<span class="t" style="left:1005.00px;top:324.20px;font-size:13.5px;line-height:18px;color:#1c1c1c;letter-spacing:-0.827px;">CCS Ref ...</span>
<span class="t" style="left:1075.80px;top:324.20px;font-size:13.5px;line-height:18px;color:#1c1c1c;letter-spacing:-0.903px;">ΔCCS [Å</span>
<span class="t" style="left:1124.80px;top:320.60px;font-size:9px;line-height:18px;color:#1c1c1c;letter-spacing:0.000px;">2</span>
<span class="t" style="left:1129.60px;top:324.20px;font-size:13.5px;line-height:18px;color:#1c1c1c;letter-spacing:0.000px;">]</span>
<div class="r" style="left:12.20px;top:413.00px;width:1125.20px;height:20.20px;background:#cce4f7;border:1.3px solid #5c6b7a;box-sizing:border-box;"></div>
<div class="r" style="left:167.80px;top:414.20px;width:1.00px;height:17.80px;background:#ddeefa;"></div>
<div class="r" style="left:309.50px;top:414.20px;width:1.00px;height:17.80px;background:#ddeefa;"></div>
<div class="r" style="left:379.50px;top:414.20px;width:1.00px;height:17.80px;background:#ddeefa;"></div>
<div class="r" style="left:448.00px;top:414.20px;width:1.00px;height:17.80px;background:#ddeefa;"></div>
<div class="r" style="left:518.00px;top:414.20px;width:1.00px;height:17.80px;background:#ddeefa;"></div>
<div class="r" style="left:585.50px;top:414.20px;width:1.00px;height:17.80px;background:#ddeefa;"></div>
<div class="r" style="left:653.50px;top:414.20px;width:1.00px;height:17.80px;background:#ddeefa;"></div>
<div class="r" style="left:723.50px;top:414.20px;width:1.00px;height:17.80px;background:#ddeefa;"></div>
<div class="r" style="left:793.50px;top:414.20px;width:1.00px;height:17.80px;background:#ddeefa;"></div>
<div class="r" style="left:862.00px;top:414.20px;width:1.00px;height:17.80px;background:#ddeefa;"></div>
<div class="r" style="left:929.50px;top:414.20px;width:1.00px;height:17.80px;background:#ddeefa;"></div>
<div class="r" style="left:998.50px;top:414.20px;width:1.00px;height:17.80px;background:#ddeefa;"></div>
<div class="r" style="left:1068.50px;top:414.20px;width:1.00px;height:17.80px;background:#ddeefa;"></div>
<div class="r" style="left:863.60px;top:345.00px;width:65.60px;height:44.40px;background:#a2ec78;"></div>
<div class="r" style="left:863.60px;top:388.80px;width:65.60px;height:1.40px;background:#eed28a;"></div>
<span class="t" style="left:16.30px;top:348.10px;font-size:13.5px;line-height:18px;color:#1c1c1c;letter-spacing:-0.315px;">C205H258N83O121P20</span>
<span class="t" style="left:173.30px;top:348.10px;font-size:13.5px;line-height:18px;color:#1c1c1c;letter-spacing:-0.296px;">Depurination_dG</span>
<span class="t" style="left:334.35px;top:348.10px;font-size:13.5px;line-height:18px;color:#1c1c1c;letter-spacing:-0.336px;">6289.2</span>
<span class="t" style="left:402.95px;top:348.10px;font-size:13.5px;line-height:18px;color:#1c1c1c;letter-spacing:-0.336px;">6290.6</span>
<span class="t" style="left:471.95px;top:348.10px;font-size:13.5px;line-height:18px;color:#1c1c1c;letter-spacing:-0.336px;">217.99</span>
<span class="t" style="left:562.40px;top:348.10px;font-size:13.5px;line-height:18px;color:#1c1c1c;letter-spacing:-0.591px;">1.4</span>
<span class="t" style="left:592.60px;top:348.10px;font-size:13.5px;line-height:18px;color:#1c1c1c;letter-spacing:-0.506px;">9.059E+...</span>
<span class="t" style="left:700.00px;top:348.10px;font-size:13.5px;line-height:18px;color:#1c1c1c;letter-spacing:-0.591px;">0.1</span>
<span class="t" style="left:769.40px;top:348.10px;font-size:13.5px;line-height:18px;color:#1c1c1c;letter-spacing:-0.591px;">3.4</span>
<span class="t" style="left:831.05px;top:348.10px;font-size:13.5px;line-height:18px;color:#1c1c1c;letter-spacing:-0.449px;">0.60</span>
<div class="r" style="left:863.60px;top:345.00px;width:65.60px;height:21.40px;background:#4bad0e;box-shadow:inset 0 0 0 1px #63bb3a;"></div>
<span class="t" style="left:886.20px;top:348.10px;font-size:13.5px;line-height:18px;color:#0c3f02;letter-spacing:-1.216px;">Yes</span>
<span class="t" style="left:16.30px;top:370.35px;font-size:13.5px;line-height:18px;color:#1c1c1c;letter-spacing:-0.315px;">C205H258N83O121P20</span>
<span class="t" style="left:173.30px;top:370.35px;font-size:13.5px;line-height:18px;color:#1c1c1c;letter-spacing:-0.133px;">Depyrimidination_dC</span>
<span class="t" style="left:334.35px;top:370.35px;font-size:13.5px;line-height:18px;color:#1c1c1c;letter-spacing:-0.336px;">6329.2</span>
<span class="t" style="left:402.95px;top:370.35px;font-size:13.5px;line-height:18px;color:#1c1c1c;letter-spacing:-0.336px;">6327.9</span>
<span class="t" style="left:466.65px;top:370.35px;font-size:13.5px;line-height:18px;color:#1c1c1c;letter-spacing:-0.146px;">-212.24</span>
<span class="t" style="left:557.10px;top:370.35px;font-size:13.5px;line-height:18px;color:#1c1c1c;letter-spacing:-0.127px;">-1.3</span>
<span class="t" style="left:592.60px;top:370.35px;font-size:13.5px;line-height:18px;color:#1c1c1c;letter-spacing:-0.506px;">2.169E+...</span>
<span class="t" style="left:700.00px;top:370.35px;font-size:13.5px;line-height:18px;color:#1c1c1c;letter-spacing:-0.591px;">0.1</span>
<span class="t" style="left:769.40px;top:370.35px;font-size:13.5px;line-height:18px;color:#1c1c1c;letter-spacing:-0.591px;">0.8</span>
<span class="t" style="left:831.05px;top:370.35px;font-size:13.5px;line-height:18px;color:#1c1c1c;letter-spacing:-0.449px;">0.60</span>
<div class="r" style="left:863.60px;top:367.60px;width:65.60px;height:21.00px;background:#4bad0e;box-shadow:inset 0 0 0 1px #63bb3a;"></div>
<span class="t" style="left:886.20px;top:370.35px;font-size:13.5px;line-height:18px;color:#0c3f02;letter-spacing:-1.216px;">Yes</span>
<span class="t" style="left:16.30px;top:392.60px;font-size:13.5px;line-height:18px;color:#1c1c1c;letter-spacing:-0.315px;">C205H258N83O121P20</span>
<span class="t" style="left:173.30px;top:392.60px;font-size:13.5px;line-height:18px;color:#1c1c1c;letter-spacing:-1.167px;">DIEA</span>
<span class="t" style="left:334.35px;top:392.60px;font-size:13.5px;line-height:18px;color:#1c1c1c;letter-spacing:-0.336px;">6569.4</span>
<span class="t" style="left:592.60px;top:392.60px;font-size:13.5px;line-height:18px;color:#1c1c1c;letter-spacing:-0.506px;">0.000E+...</span>
<span class="t" style="left:700.00px;top:392.60px;font-size:13.5px;line-height:18px;color:#1c1c1c;letter-spacing:-0.591px;">0.1</span>
<span class="t" style="left:769.40px;top:392.60px;font-size:13.5px;line-height:18px;color:#1c1c1c;letter-spacing:-0.591px;">0.0</span>
<div class="r" style="left:863.60px;top:390.00px;width:65.60px;height:21.00px;background:#f8232a;box-shadow:inset 0 0 0 1px #f36a6e;"></div>
<span class="t" style="left:887.90px;top:392.60px;font-size:13.5px;line-height:18px;color:#7d0a0e;letter-spacing:-0.266px;">No</span>
<span class="t" style="left:16.30px;top:414.85px;font-size:13.5px;line-height:18px;color:#1c1c1c;letter-spacing:-0.315px;">C205H258N83O121P20</span>
<span class="t" style="left:173.30px;top:414.85px;font-size:13.5px;line-height:18px;color:#1c1c1c;letter-spacing:0.000px;">M</span>
<span class="t" style="left:334.35px;top:414.85px;font-size:13.5px;line-height:18px;color:#1c1c1c;letter-spacing:-0.336px;">6440.2</span>
<span class="t" style="left:402.95px;top:414.85px;font-size:13.5px;line-height:18px;color:#1c1c1c;letter-spacing:-0.336px;">6439.2</span>
<span class="t" style="left:466.65px;top:414.85px;font-size:13.5px;line-height:18px;color:#1c1c1c;letter-spacing:-0.146px;">-158.75</span>
<span class="t" style="left:557.10px;top:414.85px;font-size:13.5px;line-height:18px;color:#1c1c1c;letter-spacing:-0.127px;">-1.0</span>
<span class="t" style="left:592.60px;top:414.85px;font-size:13.5px;line-height:18px;color:#1c1c1c;letter-spacing:-0.395px;">2.117E+...</span>
<span class="t" style="left:692.65px;top:414.85px;font-size:13.5px;line-height:18px;color:#1c1c1c;letter-spacing:-0.449px;">99.5</span>
<span class="t" style="left:762.05px;top:414.85px;font-size:13.5px;line-height:18px;color:#1c1c1c;letter-spacing:-0.449px;">79.2</span>
<span class="t" style="left:831.05px;top:414.85px;font-size:13.5px;line-height:18px;color:#1c1c1c;letter-spacing:-0.449px;">0.60</span>
<div class="r" style="left:863.60px;top:413.60px;width:65.60px;height:18.80px;background:#4bad0e;box-shadow:inset 0 0 0 1px #2f7f10;"></div>
<span class="t" style="left:886.20px;top:414.85px;font-size:13.5px;line-height:18px;color:#0c3f02;letter-spacing:-1.216px;">Yes</span>
<div class="r" style="left:1251.80px;top:321.60px;width:17.80px;height:126.00px;background:#f0f0f0;"></div>
<div class="r" style="left:1251.80px;top:370.20px;width:17.80px;height:58.60px;background:#c9c9c9;"></div>
<svg class="a" style="left:1251.8px;top:321.6px" width="18" height="126" viewBox="0 0 18 126"><path d="M4.6 13 L8.8 8.6 L13 13" fill="none" stroke="#333" stroke-width="1.9"/><path d="M4.6 115 L8.8 119.4 L13 115" fill="none" stroke="#333" stroke-width="1.9"/></svg>
<div class="r" style="left:833.00px;top:67.00px;width:410.40px;height:224.80px;background:#f0f0f0;box-shadow:0 2px 7px rgba(0,0,0,.30);border:1px solid #adadad;box-sizing:border-box;"></div>
<div class="r" style="left:834.00px;top:68.00px;width:408.40px;height:33.80px;background:#ffffff;"></div>
<svg class="a" style="left:841px;top:74px" width="19" height="19" viewBox="0 0 19 19"><rect x=".4" y=".4" width="18.2" height="18.2" fill="#d5ecf9"/><rect x=".4" y="17" width="18.2" height="1.6" fill="#3a78b0"/><path d="M2.2 2.6 L7.6 9 V16.4 M13 2.6 L7.6 9" fill="none" stroke="#3e7fc0" stroke-width="1.9"/><path d="M16.4 8.6 A4.3 4.3 0 1 0 16.4 14.6" fill="none" stroke="#15294f" stroke-width="2.2"/><circle cx="14.4" cy="11.6" r="1.1" fill="#c03050"/></svg>
<svg class="a" style="left:1100px;top:72px" width="134" height="24" viewBox="1100 72 134 24"><path d="M1109 84.2h13" stroke="#e4e4e4" stroke-width="1"/><rect x="1160" y="79.2" width="10.6" height="10.4" fill="none" stroke="#9a9a9a" stroke-width="1"/><path d="M1212.6 79 L1223.6 90 M1223.6 79 L1212.6 90" stroke="#9a9a9a" stroke-width="1.1"/></svg>
<div class="r" style="left:834.00px;top:101.40px;width:408.40px;height:25.80px;background:#efefef;"></div>
<div class="r" style="left:834.00px;top:101.00px;width:408.40px;height:1.00px;background:#bdbdbd;"></div>
<div class="r" style="left:834.00px;top:101.80px;width:128.00px;height:26.00px;background:#ffffff;"></div>
<div class="r" style="left:834.00px;top:127.20px;width:408.40px;height:3.40px;background:#ffffff;"></div>
<div class="r" style="left:961.00px;top:126.00px;width:281.40px;height:1.40px;background:#4e4e4e;"></div>
<div class="r" style="left:960.40px;top:103.00px;width:1.40px;height:24.40px;background:#4e4e4e;"></div>
<svg class="a" style="left:838px;top:110px" width="11" height="13" viewBox="0 0 11 13"><g fill="#2a2a2a"><rect x=".4" y=".6" width="2.6" height="11.6"/><rect x="4" y=".6" width="2.6" height="11.6"/><rect x="7.6" y=".6" width="2.6" height="11.6"/></g><g fill="#ffffff" opacity=".75"><rect x="0" y="3.4" width="11" height=".9"/><rect x="0" y="6.4" width="11" height=".9"/><rect x="0" y="9.4" width="11" height=".9"/></g></svg>
<span class="t" style="left:851.70px;top:107.90px;font-size:14px;line-height:18px;color:#1c1c1c;letter-spacing:-0.086px;">Multi Attributes</span>
<svg class="a" style="left:947px;top:112px" width="9" height="9" viewBox="0 0 10 10"><path d="M1.4 1.4 L8.6 8.6 M8.6 1.4 L1.4 8.6" stroke="#8a8a8a" stroke-width="2.4"/><path d="M1.4 1.4 L8.6 8.6 M8.6 1.4 L1.4 8.6" stroke="#ffffff" stroke-width="0.9"/></svg>
<svg class="a" style="left:1206px;top:105px" width="32" height="14" viewBox="1206 105 32 14"><rect x="1210" y="108" width="7" height="2.8" rx=".6" fill="#fff" stroke="#7c7c7c" stroke-width="1"/><rect x="1226.6" y="108.4" width="7.4" height="7.4" fill="#fff" stroke="#6e6e6e" stroke-width="1.1"/><rect x="1226.6" y="108.4" width="7.4" height="1.6" fill="#6e6e6e"/></svg>
<span class="t" style="left:846.60px;top:136.90px;font-size:13.5px;line-height:18px;color:#1c1c1c;letter-spacing:-0.356px;">Sample Position: BH4</span>
<div class="r" style="left:975.60px;top:135.00px;width:1.00px;height:20.00px;background:#d0d0d0;"></div>
<span class="t" style="left:981.00px;top:136.90px;font-size:13.5px;line-height:18px;color:#1c1c1c;letter-spacing:-0.284px;">Sample ID: 486</span>
<div class="r" style="left:843.00px;top:157.60px;width:370.40px;height:113.40px;background:#ffffff;"></div>
<div class="r" style="left:991.00px;top:157.60px;width:1.00px;height:113.40px;background:#f3f3f3;"></div>
<div class="r" style="left:1052.80px;top:157.60px;width:1.00px;height:113.40px;background:#f3f3f3;"></div>
<div class="r" style="left:1118.60px;top:157.60px;width:1.00px;height:113.40px;background:#f3f3f3;"></div>
<div class="r" style="left:843.00px;top:181.40px;width:276.00px;height:1.00px;background:#f7f7f7;"></div>
<div class="r" style="left:843.00px;top:203.80px;width:276.00px;height:1.00px;background:#f7f7f7;"></div>
<div class="r" style="left:843.00px;top:226.30px;width:276.00px;height:1.00px;background:#f7f7f7;"></div>
<div class="r" style="left:843.00px;top:248.70px;width:276.00px;height:1.00px;background:#f7f7f7;"></div>
<span class="t" style="left:847.40px;top:162.30px;font-size:13.5px;line-height:18px;color:#1c1c1c;letter-spacing:0.229px;">Method Attribute</span>
<span class="t" style="left:995.70px;top:162.30px;font-size:13.5px;line-height:18px;color:#1c1c1c;letter-spacing:0.014px;">Narrow</span>
<span class="t" style="left:1057.30px;top:162.30px;font-size:13.5px;line-height:18px;color:#1c1c1c;letter-spacing:-0.322px;">Wide</span>
<span class="t" style="left:1123.10px;top:162.30px;font-size:13.5px;line-height:18px;color:#1c1c1c;letter-spacing:-0.486px;">Sample Result</span>
<div class="r" style="left:1119.30px;top:181.60px;width:93.20px;height:88.20px;background:#96f268;"></div>
<span class="t" style="left:847.50px;top:186.20px;font-size:13.5px;line-height:18px;color:#1c1c1c;letter-spacing:-0.511px;">Base peak as expected</span>
<span class="t" style="left:996.40px;top:186.20px;font-size:13.5px;line-height:18px;color:#1c1c1c;letter-spacing:0.000px;">≥</span>
<span class="t" style="left:1012.20px;top:186.20px;font-size:13.5px;line-height:18px;color:#1c1c1c;letter-spacing:-0.378px;">100.0</span>
<span class="t" style="left:1058.60px;top:186.20px;font-size:13.5px;line-height:18px;color:#1c1c1c;letter-spacing:0.000px;">&lt;</span>
<span class="t" style="left:1077.05px;top:186.20px;font-size:13.5px;line-height:18px;color:#1c1c1c;letter-spacing:-0.449px;">70.0</span>
<div class="r" style="left:1119.30px;top:181.60px;width:93.20px;height:21.30px;background:#4bad0e;box-shadow:inset 0 0 0 1px #4a9a18;"></div>
<span class="t" style="left:1127.80px;top:186.60px;font-size:13.5px;line-height:18px;color:#0c3f02;letter-spacing:-0.378px;">100.0</span>
<span class="t" style="left:847.50px;top:208.58px;font-size:13.5px;line-height:18px;color:#1c1c1c;letter-spacing:-0.179px;">Target Profile Matching</span>
<span class="t" style="left:996.40px;top:208.58px;font-size:13.5px;line-height:18px;color:#1c1c1c;letter-spacing:0.000px;">≥</span>
<span class="t" style="left:1012.20px;top:208.58px;font-size:13.5px;line-height:18px;color:#1c1c1c;letter-spacing:-0.378px;">0.680</span>
<span class="t" style="left:1058.60px;top:208.58px;font-size:13.5px;line-height:18px;color:#1c1c1c;letter-spacing:0.000px;">&lt;</span>
<span class="t" style="left:1073.40px;top:208.58px;font-size:13.5px;line-height:18px;color:#1c1c1c;letter-spacing:-0.378px;">0.600</span>
<div class="r" style="left:1119.30px;top:204.60px;width:93.20px;height:20.50px;background:#4bad0e;box-shadow:inset 0 0 0 1px #4a9a18;"></div>
<span class="t" style="left:1126.60px;top:208.98px;font-size:13.5px;line-height:18px;color:#0c3f02;letter-spacing:-0.378px;">0.978</span>
<span class="t" style="left:847.50px;top:230.96px;font-size:13.5px;line-height:18px;color:#1c1c1c;letter-spacing:-0.196px;">Mass Accuracy [ppm]</span>
<span class="t" style="left:996.40px;top:230.96px;font-size:13.5px;line-height:18px;color:#1c1c1c;letter-spacing:0.000px;">&lt;</span>
<span class="t" style="left:1012.20px;top:230.96px;font-size:13.5px;line-height:18px;color:#1c1c1c;letter-spacing:-0.378px;">700.0</span>
<span class="t" style="left:1058.60px;top:230.96px;font-size:13.5px;line-height:18px;color:#1c1c1c;letter-spacing:0.000px;">≥</span>
<span class="t" style="left:1069.75px;top:230.96px;font-size:13.5px;line-height:18px;color:#1c1c1c;letter-spacing:-0.336px;">1000.0</span>
<div class="r" style="left:1119.30px;top:227.00px;width:93.20px;height:20.40px;background:#4bad0e;box-shadow:inset 0 0 0 1px #4a9a18;"></div>
<span class="t" style="left:1126.60px;top:231.36px;font-size:13.5px;line-height:18px;color:#0c3f02;letter-spacing:-0.378px;">215.1</span>
<span class="t" style="left:847.50px;top:253.34px;font-size:13.5px;line-height:18px;color:#1c1c1c;letter-spacing:-0.249px;">Intensity Coverage</span>
<span class="t" style="left:996.40px;top:253.34px;font-size:13.5px;line-height:18px;color:#1c1c1c;letter-spacing:0.000px;">≥</span>
<span class="t" style="left:1015.45px;top:253.34px;font-size:13.5px;line-height:18px;color:#1c1c1c;letter-spacing:-0.449px;">60.0</span>
<span class="t" style="left:1058.60px;top:253.34px;font-size:13.5px;line-height:18px;color:#1c1c1c;letter-spacing:0.000px;">&lt;</span>
<span class="t" style="left:1077.05px;top:253.34px;font-size:13.5px;line-height:18px;color:#1c1c1c;letter-spacing:-0.449px;">40.0</span>
<div class="r" style="left:1119.30px;top:249.40px;width:93.20px;height:20.20px;background:#4bad0e;box-shadow:inset 0 0 0 1px #4a9a18;"></div>
<span class="t" style="left:1130.60px;top:253.74px;font-size:13.5px;line-height:18px;color:#0c3f02;letter-spacing:-0.449px;">84.3</span>
<div class="r" style="left:1215.60px;top:157.60px;width:17.60px;height:113.40px;background:#f0f0f0;"></div>
<div class="r" style="left:1215.60px;top:178.40px;width:17.60px;height:52.60px;background:#c9c9c9;"></div>
<svg class="a" style="left:1215.6px;top:157.6px" width="18" height="114" viewBox="0 0 18 114"><path d="M4.6 13.6 L8.8 9.2 L13 13.6" fill="none" stroke="#333" stroke-width="1.9"/><path d="M4.6 100.4 L8.8 104.8 L13 100.4" fill="none" stroke="#333" stroke-width="1.9"/></svg>
<div class="r" style="left:843.00px;top:271.40px;width:373.00px;height:17.60px;background:#f0f0f0;"></div>
<div class="r" style="left:862.60px;top:271.40px;width:216.60px;height:17.60px;background:#c9c9c9;"></div>
<svg class="a" style="left:843px;top:271.4px" width="373" height="18" viewBox="0 0 373 18"><path d="M12 4.8 L7.4 9 L12 13.2" fill="none" stroke="#333" stroke-width="1.9"/><path d="M359.8 4.8 L364.4 9 L359.8 13.2" fill="none" stroke="#333" stroke-width="1.9"/></svg>
<div class="r" style="left:3.20px;top:460.80px;width:636.80px;height:283.60px;background:#f0f0f0;border:1.3px solid #adadad;border-radius:3px;box-sizing:border-box;box-shadow:inset 0 0 0 1.2px #fafafa;"></div>
<div class="r" style="left:4.40px;top:462.00px;width:634.00px;height:24.60px;background:#efefef;"></div>
<div class="r" style="left:4.40px;top:462.00px;width:113.60px;height:26.00px;background:#ffffff;"></div>
<div class="r" style="left:4.60px;top:487.40px;width:634.00px;height:2.60px;background:#fbfbfb;"></div>
<div class="r" style="left:118.00px;top:486.20px;width:520.60px;height:1.40px;background:#4e4e4e;"></div>
<div class="r" style="left:117.60px;top:463.40px;width:1.40px;height:24.20px;background:#4e4e4e;"></div>
<svg class="a" style="left:7px;top:469px" width="12" height="12" viewBox="0 0 12 12"><path d="M0.6 10.6h10.8" stroke="#5a5a5a" stroke-width="1.2"/><path d="M2 10V6.6M4.4 10V2.4M5.8 10V5M8.4 10V6.2M10 10V8" stroke="#4a4a4a" stroke-width="1.5"/></svg>
<span class="t" style="left:21.80px;top:467.20px;font-size:14px;line-height:18px;color:#1c1c1c;letter-spacing:-0.669px;">Mass Spectra</span>
<svg class="a" style="left:105px;top:470.6px" width="9" height="9" viewBox="0 0 10 10"><path d="M1.4 1.4 L8.6 8.6 M8.6 1.4 L1.4 8.6" stroke="#8a8a8a" stroke-width="2.4"/><path d="M1.4 1.4 L8.6 8.6 M8.6 1.4 L1.4 8.6" stroke="#ffffff" stroke-width="0.9"/></svg>
<div class="r" style="left:479.20px;top:462.00px;width:49.60px;height:18.00px;background:#ffffff;border-top:1.3px solid #b5b5b5;border-left:1.3px solid #b5b5b5;box-sizing:border-box;"></div><div class="r" style="left:509.80px;top:463.00px;width:18.40px;height:17.00px;background:#d2d2d2;"></div><div class="r" style="left:511.20px;top:464.00px;width:15.60px;height:7.40px;background:#e9e9e9;"></div><div class="r" style="left:511.20px;top:472.60px;width:15.60px;height:7.40px;background:#e9e9e9;"></div><svg class="a" style="left:513.0px;top:463px" width="12" height="17" viewBox="0 0 12 17"><path d="M2.4 6.6 L6 2.8 L9.6 6.6Z" fill="#111"/><path d="M2.4 13.4 L6 17.2 L9.6 13.4Z" fill="#111"/></svg><div class="r" style="left:482.2px;top:466px;width:20px;height:14px;overflow:hidden"><span class="t" style="left:4px;top:2.2px;font-size:13.5px;line-height:18px;color:#1c1c1c">1</span></div>
<div class="r" style="left:532.40px;top:462.00px;width:49.60px;height:18.00px;background:#ffffff;border-top:1.3px solid #b5b5b5;border-left:1.3px solid #b5b5b5;box-sizing:border-box;"></div><div class="r" style="left:563.00px;top:463.00px;width:18.40px;height:17.00px;background:#d2d2d2;"></div><div class="r" style="left:564.40px;top:464.00px;width:15.60px;height:7.40px;background:#e9e9e9;"></div><div class="r" style="left:564.40px;top:472.60px;width:15.60px;height:7.40px;background:#e9e9e9;"></div><svg class="a" style="left:566.2px;top:463px" width="12" height="17" viewBox="0 0 12 17"><path d="M2.4 6.6 L6 2.8 L9.6 6.6Z" fill="#111"/><path d="M2.4 13.4 L6 17.2 L9.6 13.4Z" fill="#111"/></svg><div class="r" style="left:535.4px;top:466px;width:20px;height:14px;overflow:hidden"><span class="t" style="left:4px;top:2.2px;font-size:13.5px;line-height:18px;color:#1c1c1c">2</span></div>
<svg class="a" style="left:590.4px;top:464px" width="44" height="14" viewBox="0 0 44 14"><path d="M0.8 3.4 H7.2 L4 7.6Z" fill="#fff" stroke="#8a8a8a" stroke-width="1"/><rect x="14.8" y="3.2" width="7.2" height="2.8" rx=".4" fill="#fff" stroke="#7a7a7a" stroke-width="1"/><rect x="31.6" y="3.2" width="7.6" height="7.6" fill="#fff" stroke="#6e6e6e" stroke-width="1.1"/><rect x="31.6" y="3.2" width="7.6" height="1.6" fill="#6e6e6e"/></svg>
<svg class="a" style="left:0;top:488px" width="640" height="256" viewBox="0 488 640 256"><rect x="76.8" y="502.3" width="553.2" height="65.59999999999997" fill="#fff" stroke="#3a3a3a" stroke-width="1.3"/><path d="M76.8 567.9 H630" stroke="#1f4e79" stroke-width="1.4"/><path d="M72.2 510.4 H76.8" stroke="#3a3a3a" stroke-width="1.1"/><path d="M72.2 519.3 H76.8" stroke="#3a3a3a" stroke-width="1.1"/><path d="M72.2 528.3 H76.8" stroke="#3a3a3a" stroke-width="1.1"/><path d="M72.2 537.4 H76.8" stroke="#3a3a3a" stroke-width="1.1"/><path d="M72.2 546.4 H76.8" stroke="#3a3a3a" stroke-width="1.1"/><path d="M72.2 555.5 H76.8" stroke="#3a3a3a" stroke-width="1.1"/><path d="M72.2 564.6 H76.8" stroke="#3a3a3a" stroke-width="1.1"/><path d="M78.7 567.9 V570.9" stroke="#3a3a3a" stroke-width="1.1"/><path d="M101.6 567.9 V572.7" stroke="#3a3a3a" stroke-width="1.1"/><path d="M124.5 567.9 V570.9" stroke="#3a3a3a" stroke-width="1.1"/><path d="M147.3 567.9 V572.7" stroke="#3a3a3a" stroke-width="1.1"/><path d="M170.2 567.9 V570.9" stroke="#3a3a3a" stroke-width="1.1"/><path d="M193.0 567.9 V572.7" stroke="#3a3a3a" stroke-width="1.1"/><path d="M215.9 567.9 V570.9" stroke="#3a3a3a" stroke-width="1.1"/><path d="M238.7 567.9 V572.7" stroke="#3a3a3a" stroke-width="1.1"/><path d="M261.6 567.9 V570.9" stroke="#3a3a3a" stroke-width="1.1"/><path d="M284.5 567.9 V572.7" stroke="#3a3a3a" stroke-width="1.1"/><path d="M307.3 567.9 V570.9" stroke="#3a3a3a" stroke-width="1.1"/><path d="M330.2 567.9 V572.7" stroke="#3a3a3a" stroke-width="1.1"/><path d="M353.0 567.9 V570.9" stroke="#3a3a3a" stroke-width="1.1"/><path d="M375.9 567.9 V572.7" stroke="#3a3a3a" stroke-width="1.1"/><path d="M398.7 567.9 V570.9" stroke="#3a3a3a" stroke-width="1.1"/><path d="M421.6 567.9 V572.7" stroke="#3a3a3a" stroke-width="1.1"/><path d="M444.4 567.9 V570.9" stroke="#3a3a3a" stroke-width="1.1"/><path d="M467.3 567.9 V572.7" stroke="#3a3a3a" stroke-width="1.1"/><path d="M490.2 567.9 V570.9" stroke="#3a3a3a" stroke-width="1.1"/><path d="M513.0 567.9 V572.7" stroke="#3a3a3a" stroke-width="1.1"/><path d="M535.9 567.9 V570.9" stroke="#3a3a3a" stroke-width="1.1"/><path d="M558.7 567.9 V572.7" stroke="#3a3a3a" stroke-width="1.1"/><path d="M581.6 567.9 V570.9" stroke="#3a3a3a" stroke-width="1.1"/><path d="M604.4 567.9 V572.7" stroke="#3a3a3a" stroke-width="1.1"/><path d="M627.3 567.9 V570.9" stroke="#3a3a3a" stroke-width="1.1"/><text x="101.60" y="588.10" font-size="12" text-anchor="middle" fill="#1c1c1c" textLength="26.20" lengthAdjust="spacing">5000</text><text x="147.31" y="588.10" font-size="12" text-anchor="middle" fill="#1c1c1c" textLength="26.20" lengthAdjust="spacing">5250</text><text x="193.03" y="588.10" font-size="12" text-anchor="middle" fill="#1c1c1c" textLength="26.20" lengthAdjust="spacing">5500</text><text x="238.74" y="588.10" font-size="12" text-anchor="middle" fill="#1c1c1c" textLength="26.20" lengthAdjust="spacing">5750</text><text x="284.45" y="588.10" font-size="12" text-anchor="middle" fill="#1c1c1c" textLength="26.20" lengthAdjust="spacing">6000</text><text x="330.16" y="588.10" font-size="12" text-anchor="middle" fill="#1c1c1c" textLength="26.20" lengthAdjust="spacing">6250</text><text x="375.88" y="588.10" font-size="12" text-anchor="middle" fill="#1c1c1c" textLength="26.20" lengthAdjust="spacing">6500</text><text x="421.59" y="588.10" font-size="12" text-anchor="middle" fill="#1c1c1c" textLength="26.20" lengthAdjust="spacing">6750</text><text x="467.30" y="588.10" font-size="12" text-anchor="middle" fill="#1c1c1c" textLength="26.20" lengthAdjust="spacing">7000</text><text x="513.01" y="588.10" font-size="12" text-anchor="middle" fill="#1c1c1c" textLength="26.20" lengthAdjust="spacing">7250</text><text x="558.73" y="588.10" font-size="12" text-anchor="middle" fill="#1c1c1c" textLength="26.20" lengthAdjust="spacing">7500</text><text x="605.60" y="588.00" font-size="12" text-anchor="start" fill="#1c1c1c" textLength="20.00" lengthAdjust="spacing">m/z</text><text x="44.80" y="526.00" font-size="12" text-anchor="start" fill="#1c1c1c" textLength="17.20" lengthAdjust="spacing">x10</text><text x="63.00" y="515.80" font-size="12" text-anchor="start" fill="#1c1c1c">5</text><text x="51.80" y="559.80" font-size="12" text-anchor="start" fill="#1c1c1c" textLength="15.20" lengthAdjust="spacing">0.5</text><text x="30.40" y="557.20" font-size="12" text-anchor="start" fill="#1c1c1c" textLength="45.60" lengthAdjust="spacing" transform="rotate(-90 30.40 557.20)">Intensity</text><text x="299.80" y="604.30" font-size="12" text-anchor="start" fill="#1c1c1c" textLength="106.60" lengthAdjust="spacing">(1) MaxEnt Spectrum</text><path d="M364.8 567.9 V520" stroke="#256fa6" stroke-width="1.6"/><path d="M340.4 567.9 V557.4" stroke="#256fa6" stroke-width="1.4"/><path d="M369.4 566 V557.6 M372.4 566 V559" stroke="#7fb4dc" stroke-width="1.2" stroke-dasharray="1.6 1.2"/><text x="361.40" y="559.60" font-size="13.5" text-anchor="start" fill="#1c1c1c" textLength="56.00" lengthAdjust="spacing" transform="rotate(-90 361.40 559.60)">6439.187</text><text x="379.20" y="536.40" font-size="13.5" text-anchor="start" fill="#1c1c1c" transform="rotate(-90 379.20 536.40)">M</text><defs><linearGradient id="gz" x1="0" y1="0" x2="0" y2="1"><stop offset="0" stop-color="#bcc3c9"/><stop offset=".31" stop-color="#c4cad0"/><stop offset=".33" stop-color="#d0d6dd"/><stop offset="1" stop-color="#eceff2"/></linearGradient></defs><rect x="76.8" y="622.5" width="553.2" height="65.79999999999995" fill="#fff"/><rect x="76.8" y="622.5" width="42.60000000000001" height="65.79999999999995" fill="url(#gz)"/><rect x="537" y="622.5" width="93" height="65.79999999999995" fill="url(#gz)"/><rect x="76.8" y="622.5" width="553.2" height="65.79999999999995" fill="none" stroke="#3a3a3a" stroke-width="1.3"/><path d="M87.4 643.2 H630" stroke="#3c78a8" stroke-width="1.2"/><text x="79.20" y="646.20" font-size="11" text-anchor="start" fill="#2d6ea3">z</text><path d="M72.2 628.7 H76.8" stroke="#3a3a3a" stroke-width="1.1"/><path d="M72.2 648.6 H76.8" stroke="#3a3a3a" stroke-width="1.1"/><path d="M72.2 668.6 H76.8" stroke="#3a3a3a" stroke-width="1.1"/><path d="M72.2 688.3 H76.8" stroke="#3a3a3a" stroke-width="1.1"/><path d="M99.0 688.3 V691.3" stroke="#3a3a3a" stroke-width="1.1"/><path d="M123.9 688.3 V693.1" stroke="#3a3a3a" stroke-width="1.1"/><path d="M148.8 688.3 V691.3" stroke="#3a3a3a" stroke-width="1.1"/><path d="M173.6 688.3 V693.1" stroke="#3a3a3a" stroke-width="1.1"/><path d="M198.5 688.3 V691.3" stroke="#3a3a3a" stroke-width="1.1"/><path d="M223.4 688.3 V693.1" stroke="#3a3a3a" stroke-width="1.1"/><path d="M248.2 688.3 V691.3" stroke="#3a3a3a" stroke-width="1.1"/><path d="M273.1 688.3 V693.1" stroke="#3a3a3a" stroke-width="1.1"/><path d="M298.0 688.3 V691.3" stroke="#3a3a3a" stroke-width="1.1"/><path d="M322.9 688.3 V693.1" stroke="#3a3a3a" stroke-width="1.1"/><path d="M347.7 688.3 V691.3" stroke="#3a3a3a" stroke-width="1.1"/><path d="M372.6 688.3 V693.1" stroke="#3a3a3a" stroke-width="1.1"/><path d="M397.5 688.3 V691.3" stroke="#3a3a3a" stroke-width="1.1"/><path d="M422.3 688.3 V693.1" stroke="#3a3a3a" stroke-width="1.1"/><path d="M447.2 688.3 V691.3" stroke="#3a3a3a" stroke-width="1.1"/><path d="M472.1 688.3 V693.1" stroke="#3a3a3a" stroke-width="1.1"/><path d="M496.9 688.3 V691.3" stroke="#3a3a3a" stroke-width="1.1"/><path d="M521.8 688.3 V693.1" stroke="#3a3a3a" stroke-width="1.1"/><path d="M546.7 688.3 V691.3" stroke="#3a3a3a" stroke-width="1.1"/><path d="M571.5 688.3 V693.1" stroke="#3a3a3a" stroke-width="1.1"/><path d="M596.4 688.3 V691.3" stroke="#3a3a3a" stroke-width="1.1"/><path d="M621.3 688.3 V693.1" stroke="#3a3a3a" stroke-width="1.1"/><text x="123.90" y="709.20" font-size="12" text-anchor="middle" fill="#1c1c1c" textLength="19.65" lengthAdjust="spacing">500</text><text x="173.64" y="709.20" font-size="12" text-anchor="middle" fill="#1c1c1c" textLength="19.65" lengthAdjust="spacing">750</text><text x="223.38" y="709.20" font-size="12" text-anchor="middle" fill="#1c1c1c" textLength="26.20" lengthAdjust="spacing">1000</text><text x="273.11" y="709.20" font-size="12" text-anchor="middle" fill="#1c1c1c" textLength="26.20" lengthAdjust="spacing">1250</text><text x="322.85" y="709.20" font-size="12" text-anchor="middle" fill="#1c1c1c" textLength="26.20" lengthAdjust="spacing">1500</text><text x="372.59" y="709.20" font-size="12" text-anchor="middle" fill="#1c1c1c" textLength="26.20" lengthAdjust="spacing">1750</text><text x="422.32" y="709.20" font-size="12" text-anchor="middle" fill="#1c1c1c" textLength="26.20" lengthAdjust="spacing">2000</text><text x="472.06" y="709.20" font-size="12" text-anchor="middle" fill="#1c1c1c" textLength="26.20" lengthAdjust="spacing">2250</text><text x="521.80" y="709.20" font-size="12" text-anchor="middle" fill="#1c1c1c" textLength="26.20" lengthAdjust="spacing">2500</text><text x="571.54" y="709.20" font-size="12" text-anchor="middle" fill="#1c1c1c" textLength="26.20" lengthAdjust="spacing">2750</text><text x="605.60" y="709.00" font-size="12" text-anchor="start" fill="#1c1c1c" textLength="20.00" lengthAdjust="spacing">m/z</text><text x="44.80" y="645.80" font-size="12" text-anchor="start" fill="#1c1c1c" textLength="17.20" lengthAdjust="spacing">x10</text><text x="63.00" y="637.00" font-size="12" text-anchor="start" fill="#1c1c1c">5</text><text x="51.80" y="692.40" font-size="12" text-anchor="start" fill="#1c1c1c" textLength="15.20" lengthAdjust="spacing">0.0</text><text x="30.40" y="677.40" font-size="12" text-anchor="start" fill="#1c1c1c" textLength="45.60" lengthAdjust="spacing" transform="rotate(-90 30.40 677.40)">Intensity</text><text x="297.20" y="725.60" font-size="12" text-anchor="start" fill="#1c1c1c" textLength="111.80" lengthAdjust="spacing">(2) Average Spectrum</text><text x="123.30" y="638.00" font-size="13" text-anchor="middle" fill="#1c1c1c" textLength="13.20" lengthAdjust="spacing">13</text><path d="M122.9 641 V643.2" stroke="#3c78a8" stroke-width="1"/><text x="141.60" y="638.00" font-size="13" text-anchor="middle" fill="#1c1c1c" textLength="13.20" lengthAdjust="spacing">11</text><path d="M141.2 641 V643.2" stroke="#3c78a8" stroke-width="1"/><text x="167.00" y="638.00" font-size="13" text-anchor="middle" fill="#1c1c1c">9</text><path d="M166.6 641 V643.2" stroke="#3c78a8" stroke-width="1"/><text x="185.30" y="638.00" font-size="13" text-anchor="middle" fill="#1c1c1c">8</text><path d="M184.9 641 V643.2" stroke="#3c78a8" stroke-width="1"/><text x="207.60" y="638.00" font-size="13" text-anchor="middle" fill="#1c1c1c">7</text><path d="M207.2 641 V643.2" stroke="#3c78a8" stroke-width="1"/><text x="239.60" y="638.00" font-size="13" text-anchor="middle" fill="#1c1c1c">6</text><path d="M239.2 641 V643.2" stroke="#3c78a8" stroke-width="1"/><text x="282.40" y="638.00" font-size="13" text-anchor="middle" fill="#1c1c1c">5</text><path d="M282.0 641 V643.2" stroke="#3c78a8" stroke-width="1"/><text x="346.30" y="638.00" font-size="13" text-anchor="middle" fill="#1c1c1c">4</text><path d="M345.9 641 V643.2" stroke="#3c78a8" stroke-width="1"/><text x="454.00" y="638.00" font-size="13" text-anchor="middle" fill="#1c1c1c">3</text><path d="M453.6 641 V643.2" stroke="#3c78a8" stroke-width="1"/><text x="132.00" y="661.40" font-size="13" text-anchor="middle" fill="#1c1c1c" textLength="13.60" lengthAdjust="spacing">12</text><path d="M132.0 643.2 V645.4" stroke="#3c78a8" stroke-width="1"/><text x="153.80" y="661.40" font-size="13" text-anchor="middle" fill="#1c1c1c" textLength="13.60" lengthAdjust="spacing">10</text><path d="M153.8 643.2 V645.4" stroke="#3c78a8" stroke-width="1"/><path d="M120 687.9 H630" stroke="#1f4e79" stroke-width="1.3"/><path d="M166.6 688.3 V642.4" stroke="#2a72a8" stroke-width="1.3"/><path d="M184.4 688.3 V647.6" stroke="#2a72a8" stroke-width="1.3"/><path d="M207.6 688.3 V673" stroke="#3a80b2" stroke-width="1.2"/><path d="M237.9 688.3 V680" stroke="#3a80b2" stroke-width="1.3"/><path d="M163.4 688.3 V674.6" stroke="#3a80b2" stroke-width="1.2"/><path d="M181.2 688.3 V676" stroke="#4a8dbd" stroke-width="1.5"/><path d="M152 688.3 V682.6" stroke="#4a8dbd" stroke-width="1.4"/><path d="M150.4 688.3 V684" stroke="#6aa3cc" stroke-width="1.2"/><path d="M154 688.3 V684.6" stroke="#6aa3cc" stroke-width="1"/><path d="M148 688.3 V685.4" stroke="#6aa3cc" stroke-width="1"/><path d="M280.9 688.3 V683" stroke="#8ab8da" stroke-width="1.2"/><path d="M344.7 688.3 V682" stroke="#4a8dbd" stroke-width="1.4"/><path d="M451.6 688.3 V685" stroke="#4a8dbd" stroke-width="1.4"/><path d="M174 688.3 V686" stroke="#6aa3cc" stroke-width="1"/><path d="M196.6 688.3 V685.6" stroke="#6aa3cc" stroke-width="1"/><path d="M203.4 688.3 V685" stroke="#6aa3cc" stroke-width="1"/><path d="M160 688.3 V685.6" stroke="#6aa3cc" stroke-width="1"/><path d="M346.6 688.3 V686" stroke="#6aa3cc" stroke-width="1"/><path d="M453.4 688.3 V686.4" stroke="#6aa3cc" stroke-width="1"/></svg>
<svg class="a" style="left:10.7px;top:599.4px" width="28" height="15" viewBox="-1.6 -1.6 28 15"><rect x="-1.4" y="-1.4" width="27.4" height="14.6" rx="2" fill="#e6f1fb"/><rect width="24.6" height="12" rx="1" fill="#bfdaf3"/><rect x="12" width=".8" height="12" fill="#d2e6f7"/><path d="M6.8 2.6 L9.9 6 L6.8 9.8 L3.7 6Z" fill="#14202e"/><rect x="4.4" y="5.7" width="4.8" height=".8" fill="#8aa4bd"/><path d="M15.4 6.4 L18.8 3.5 L22.2 6.4 L18.8 9.3Z" fill="#14202e"/><rect x="18.4" y="4.8" width=".9" height="3.2" fill="#8aa4bd"/></svg>
<svg class="a" style="left:10.7px;top:720.4px" width="28" height="15" viewBox="-1.6 -1.6 28 15"><rect x="-1.4" y="-1.4" width="27.4" height="14.6" rx="2" fill="#e6f1fb"/><rect width="24.6" height="12" rx="1" fill="#bfdaf3"/><rect x="12" width=".8" height="12" fill="#d2e6f7"/><path d="M6.8 2.6 L9.9 6 L6.8 9.8 L3.7 6Z" fill="#14202e"/><rect x="4.4" y="5.7" width="4.8" height=".8" fill="#8aa4bd"/><path d="M15.4 6.4 L18.8 3.5 L22.2 6.4 L18.8 9.3Z" fill="#14202e"/><rect x="18.4" y="4.8" width=".9" height="3.2" fill="#8aa4bd"/></svg>
<div class="r" style="left:642.60px;top:460.80px;width:635.20px;height:283.60px;background:#f0f0f0;border:1.3px solid #adadad;border-radius:3px;box-sizing:border-box;box-shadow:inset 0 0 0 1.2px #fafafa;"></div>
<div class="r" style="left:644.20px;top:462.00px;width:632.40px;height:24.60px;background:#efefef;"></div>
<div class="r" style="left:644.20px;top:462.00px;width:130.40px;height:26.00px;background:#ffffff;"></div>
<div class="r" style="left:644.00px;top:487.40px;width:632.40px;height:2.60px;background:#fbfbfb;"></div>
<div class="r" style="left:775.00px;top:486.20px;width:501.60px;height:1.40px;background:#4e4e4e;"></div>
<div class="r" style="left:774.60px;top:463.40px;width:1.40px;height:24.20px;background:#4e4e4e;"></div>
<svg class="a" style="left:646px;top:470px" width="14" height="12" viewBox="0 0 14 12"><path d="M0.6 9 L3 9 L4.8 2 L7 9.4 L8.6 6.4 L10.2 9 L13 9" fill="none" stroke="#3a3a3a" stroke-width="1.1"/></svg>
<span class="t" style="left:661.30px;top:467.40px;font-size:14px;line-height:18px;color:#1c1c1c;letter-spacing:-0.401px;">Chromatograms</span>
<svg class="a" style="left:762px;top:470.6px" width="9" height="9" viewBox="0 0 10 10"><path d="M1.4 1.4 L8.6 8.6 M8.6 1.4 L1.4 8.6" stroke="#8a8a8a" stroke-width="2.4"/><path d="M1.4 1.4 L8.6 8.6 M8.6 1.4 L1.4 8.6" stroke="#ffffff" stroke-width="0.9"/></svg>
<svg class="a" style="left:778.6px;top:469px" width="14" height="13" viewBox="0 0 14 13"><rect x=".5" y=".6" width="12.6" height="11.6" fill="#eaf6ea"/><path d="M1 2.2h12M1 6.4h12M1 10.8h12" stroke="#2f9a50" stroke-width="1.4"/><path d="M4 4.4h6M5 8.6h6" stroke="#7a2a1a" stroke-width="1.6"/></svg>
<span class="t" style="left:794.40px;top:467.40px;font-size:14px;line-height:18px;color:#1c1c1c;letter-spacing:-0.718px;">Protein Sequence</span>
<div class="r" style="left:1118.00px;top:462.00px;width:49.80px;height:18.00px;background:#ffffff;border-top:1.3px solid #b5b5b5;border-left:1.3px solid #b5b5b5;box-sizing:border-box;"></div><div class="r" style="left:1148.60px;top:463.00px;width:18.60px;height:17.00px;background:#d2d2d2;"></div><div class="r" style="left:1150.00px;top:464.00px;width:15.80px;height:7.40px;background:#e9e9e9;"></div><div class="r" style="left:1150.00px;top:472.60px;width:15.80px;height:7.40px;background:#e9e9e9;"></div><svg class="a" style="left:1151.9px;top:463px" width="12" height="17" viewBox="0 0 12 17"><path d="M2.4 6.6 L6 2.8 L9.6 6.6Z" fill="#111"/><path d="M2.4 13.4 L6 17.2 L9.6 13.4Z" fill="#111"/></svg><div class="r" style="left:1121.0px;top:466px;width:20px;height:14px;overflow:hidden"><span class="t" style="left:4px;top:2.2px;font-size:13.5px;line-height:18px;color:#1c1c1c">1</span></div>
<div class="r" style="left:1172.40px;top:462.00px;width:49.00px;height:18.00px;background:#ffffff;border-top:1.3px solid #b5b5b5;border-left:1.3px solid #b5b5b5;box-sizing:border-box;"></div><div class="r" style="left:1202.40px;top:463.00px;width:18.40px;height:17.00px;background:#d2d2d2;"></div><div class="r" style="left:1203.80px;top:464.00px;width:15.60px;height:7.40px;background:#e9e9e9;"></div><div class="r" style="left:1203.80px;top:472.60px;width:15.60px;height:7.40px;background:#e9e9e9;"></div><svg class="a" style="left:1205.6px;top:463px" width="12" height="17" viewBox="0 0 12 17"><path d="M2.4 6.6 L6 2.8 L9.6 6.6Z" fill="#111"/><path d="M2.4 13.4 L6 17.2 L9.6 13.4Z" fill="#111"/></svg><div class="r" style="left:1175.4px;top:466px;width:20px;height:14px;overflow:hidden"><span class="t" style="left:4px;top:2.2px;font-size:13.5px;line-height:18px;color:#1c1c1c">1</span></div>
<svg class="a" style="left:1231.0px;top:464px" width="44" height="14" viewBox="0 0 44 14"><path d="M0.8 3.4 H7.2 L4 7.6Z" fill="#fff" stroke="#8a8a8a" stroke-width="1"/><rect x="14.8" y="3.2" width="7.2" height="2.8" rx=".4" fill="#fff" stroke="#7a7a7a" stroke-width="1"/><rect x="31.6" y="3.2" width="7.6" height="7.6" fill="#fff" stroke="#6e6e6e" stroke-width="1.1"/><rect x="31.6" y="3.2" width="7.6" height="1.6" fill="#6e6e6e"/></svg>
<div class="r" style="left:651.00px;top:496.00px;width:601.60px;height:239.80px;background:#f0f0f0;border:2px solid #a2b8cd;border-radius:4px;box-sizing:border-box;box-shadow:inset 0 0 0 1.6px #e4effb;"></div>
<div class="r" style="left:1259.00px;top:489.00px;width:17.20px;height:254.00px;background:#f0f0f0;"></div>
<div class="r" style="left:1259.00px;top:580.00px;width:17.20px;height:70.40px;background:#c9c9c9;"></div>
<svg class="a" style="left:1259px;top:489px" width="18" height="254" viewBox="0 0 18 254"><path d="M4.4 14.6 L8.6 10.2 L12.8 14.6" fill="none" stroke="#333" stroke-width="1.9"/><path d="M4.4 240.4 L8.6 244.8 L12.8 240.4" fill="none" stroke="#333" stroke-width="1.9"/></svg>
<svg class="a" style="left:652px;top:497px" width="600" height="238" viewBox="652 497 600 238"><rect x="722.8" y="502.2" width="527.2" height="180.90000000000003" fill="#fff" stroke="#3a3a3a" stroke-width="1.3"/><path d="M876.4 683 L900.7 634 L923.8 514.6 L948.8 648.7 L972.5 670.4 L994.8 676 L994.8 683Z" fill="#6fb0e0"/><path d="M876.4 683 L900.7 634 L923.8 514.6 L948.8 648.7 L972.5 670.4 L994.8 676 L1019.8 681.6 L1042 683" fill="none" stroke="#2f6fa8" stroke-width="1"/><path d="M722.8 683.1 H1250" stroke="#3a3a3a" stroke-width="1.3"/><rect x="875.6" y="504.8" width="119.2" height="2.8" fill="#0f5fae"/><text x="930.20" y="552.00" font-size="13" text-anchor="start" fill="#2a74b4" textLength="42.40" lengthAdjust="spacing" transform="rotate(-90 930.20 552.00)">M_0.60</text><path d="M718.0 683.1 H722.8" stroke="#3a3a3a" stroke-width="1.1"/><path d="M718.0 664.1 H722.8" stroke="#3a3a3a" stroke-width="1.1"/><path d="M718.0 645.0 H722.8" stroke="#3a3a3a" stroke-width="1.1"/><path d="M718.0 626.0 H722.8" stroke="#3a3a3a" stroke-width="1.1"/><path d="M718.0 606.9 H722.8" stroke="#3a3a3a" stroke-width="1.1"/><path d="M718.0 587.9 H722.8" stroke="#3a3a3a" stroke-width="1.1"/><path d="M718.0 568.8 H722.8" stroke="#3a3a3a" stroke-width="1.1"/><path d="M718.0 549.8 H722.8" stroke="#3a3a3a" stroke-width="1.1"/><path d="M718.0 530.7 H722.8" stroke="#3a3a3a" stroke-width="1.1"/><path d="M718.0 511.6 H722.8" stroke="#3a3a3a" stroke-width="1.1"/><path d="M740.1 683.1 V688.1" stroke="#3a3a3a" stroke-width="1.1"/><path d="M758.5 683.1 V686.3" stroke="#3a3a3a" stroke-width="1.1"/><path d="M776.8 683.1 V688.1" stroke="#3a3a3a" stroke-width="1.1"/><path d="M795.1 683.1 V686.3" stroke="#3a3a3a" stroke-width="1.1"/><path d="M813.5 683.1 V688.1" stroke="#3a3a3a" stroke-width="1.1"/><path d="M831.9 683.1 V686.3" stroke="#3a3a3a" stroke-width="1.1"/><path d="M850.2 683.1 V688.1" stroke="#3a3a3a" stroke-width="1.1"/><path d="M868.5 683.1 V686.3" stroke="#3a3a3a" stroke-width="1.1"/><path d="M886.9 683.1 V688.1" stroke="#3a3a3a" stroke-width="1.1"/><path d="M905.2 683.1 V686.3" stroke="#3a3a3a" stroke-width="1.1"/><path d="M923.6 683.1 V688.1" stroke="#3a3a3a" stroke-width="1.1"/><path d="M942.0 683.1 V686.3" stroke="#3a3a3a" stroke-width="1.1"/><path d="M960.3 683.1 V688.1" stroke="#3a3a3a" stroke-width="1.1"/><path d="M978.7 683.1 V686.3" stroke="#3a3a3a" stroke-width="1.1"/><path d="M997.0 683.1 V688.1" stroke="#3a3a3a" stroke-width="1.1"/><path d="M1015.4 683.1 V686.3" stroke="#3a3a3a" stroke-width="1.1"/><path d="M1033.7 683.1 V688.1" stroke="#3a3a3a" stroke-width="1.1"/><path d="M1052.1 683.1 V686.3" stroke="#3a3a3a" stroke-width="1.1"/><path d="M1070.4 683.1 V688.1" stroke="#3a3a3a" stroke-width="1.1"/><path d="M1088.8 683.1 V686.3" stroke="#3a3a3a" stroke-width="1.1"/><path d="M1107.1 683.1 V688.1" stroke="#3a3a3a" stroke-width="1.1"/><path d="M1125.5 683.1 V686.3" stroke="#3a3a3a" stroke-width="1.1"/><path d="M1143.8 683.1 V688.1" stroke="#3a3a3a" stroke-width="1.1"/><path d="M1162.2 683.1 V686.3" stroke="#3a3a3a" stroke-width="1.1"/><path d="M1180.5 683.1 V688.1" stroke="#3a3a3a" stroke-width="1.1"/><path d="M1198.8 683.1 V686.3" stroke="#3a3a3a" stroke-width="1.1"/><path d="M1217.2 683.1 V688.1" stroke="#3a3a3a" stroke-width="1.1"/><path d="M1235.6 683.1 V686.3" stroke="#3a3a3a" stroke-width="1.1"/><text x="739.30" y="704.80" font-size="13.5" text-anchor="middle" fill="#1c1c1c" textLength="17.60" lengthAdjust="spacing">0.1</text><text x="776.00" y="704.80" font-size="13.5" text-anchor="middle" fill="#1c1c1c" textLength="17.60" lengthAdjust="spacing">0.2</text><text x="812.70" y="704.80" font-size="13.5" text-anchor="middle" fill="#1c1c1c" textLength="17.60" lengthAdjust="spacing">0.3</text><text x="849.40" y="704.80" font-size="13.5" text-anchor="middle" fill="#1c1c1c" textLength="17.60" lengthAdjust="spacing">0.4</text><text x="886.10" y="704.80" font-size="13.5" text-anchor="middle" fill="#1c1c1c" textLength="17.60" lengthAdjust="spacing">0.5</text><text x="922.80" y="704.80" font-size="13.5" text-anchor="middle" fill="#1c1c1c" textLength="17.60" lengthAdjust="spacing">0.6</text><text x="959.50" y="704.80" font-size="13.5" text-anchor="middle" fill="#1c1c1c" textLength="17.60" lengthAdjust="spacing">0.7</text><text x="996.20" y="704.80" font-size="13.5" text-anchor="middle" fill="#1c1c1c" textLength="17.60" lengthAdjust="spacing">0.8</text><text x="1032.90" y="704.80" font-size="13.5" text-anchor="middle" fill="#1c1c1c" textLength="17.60" lengthAdjust="spacing">0.9</text><text x="1069.60" y="704.80" font-size="13.5" text-anchor="middle" fill="#1c1c1c">1</text><text x="1106.30" y="704.80" font-size="13.5" text-anchor="middle" fill="#1c1c1c" textLength="17.60" lengthAdjust="spacing">1.1</text><text x="1143.00" y="704.80" font-size="13.5" text-anchor="middle" fill="#1c1c1c" textLength="17.60" lengthAdjust="spacing">1.2</text><text x="1184.60" y="704.80" font-size="13.5" text-anchor="start" fill="#1c1c1c" textLength="61.20" lengthAdjust="spacing">Time [min]</text><text x="695.80" y="575.20" font-size="13.5" text-anchor="start" fill="#1c1c1c" textLength="17.20" lengthAdjust="spacing">3.0</text><text x="695.80" y="613.30" font-size="13.5" text-anchor="start" fill="#1c1c1c" textLength="17.20" lengthAdjust="spacing">2.0</text><text x="695.80" y="651.40" font-size="13.5" text-anchor="start" fill="#1c1c1c" textLength="17.20" lengthAdjust="spacing">1.0</text><text x="695.80" y="689.50" font-size="13.5" text-anchor="start" fill="#1c1c1c" textLength="17.20" lengthAdjust="spacing">0.0</text><text x="687.80" y="528.80" font-size="13.5" text-anchor="start" fill="#1c1c1c" textLength="19.40" lengthAdjust="spacing">x10</text><text x="708.80" y="519.80" font-size="13.5" text-anchor="start" fill="#1c1c1c">6</text><text x="671.40" y="637.60" font-size="13.5" text-anchor="start" fill="#1c1c1c" textLength="92.00" lengthAdjust="spacing" transform="rotate(-90 671.40 637.60)">Signal Intensity</text><text x="956.40" y="725.50" font-size="13" text-anchor="start" fill="#1c1c1c" textLength="59.00" lengthAdjust="spacing">(2) TIC MS</text></svg>
<svg class="a" style="left:650.0px;top:720.8px" width="28" height="15" viewBox="-1.6 -1.6 28 15"><rect x="-1.4" y="-1.4" width="27.4" height="14.6" rx="2" fill="#e6f1fb"/><rect width="24.6" height="12" rx="1" fill="#bfdaf3"/><rect x="12" width=".8" height="12" fill="#d2e6f7"/><path d="M6.8 2.6 L9.9 6 L6.8 9.8 L3.7 6Z" fill="#14202e"/><rect x="4.4" y="5.7" width="4.8" height=".8" fill="#8aa4bd"/><path d="M15.4 6.4 L18.8 3.5 L22.2 6.4 L18.8 9.3Z" fill="#14202e"/><rect x="18.4" y="4.8" width=".9" height="3.2" fill="#8aa4bd"/></svg>
</div></div></body></html>
